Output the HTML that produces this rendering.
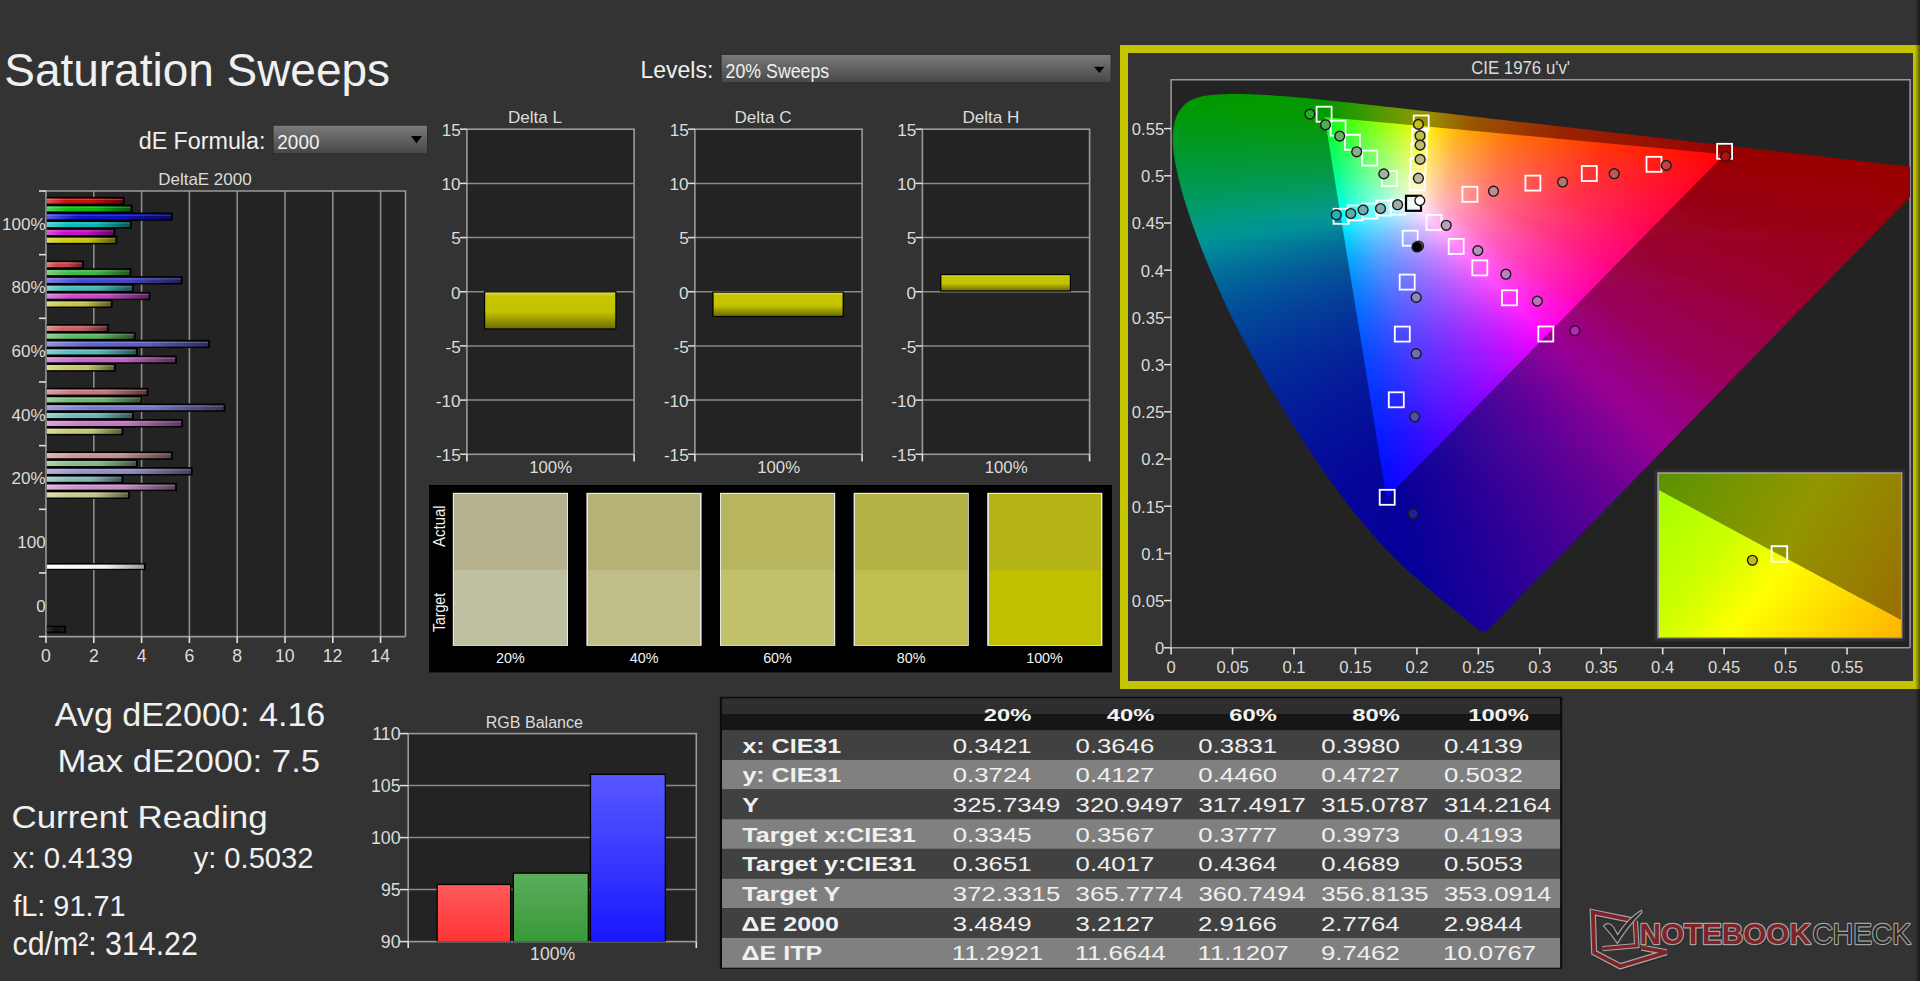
<!DOCTYPE html>
<html><head><meta charset="utf-8"><style>
html,body{margin:0;padding:0;background:#333333;width:1920px;height:981px;overflow:hidden}
svg{position:absolute;left:0;top:0}
text{font-family:"Liberation Sans",sans-serif}
.lay{position:absolute;overflow:hidden}
.lay i{position:absolute;left:0;right:0;height:3px;display:block}
</style></head><body>
<svg width="1920" height="981" viewBox="0 0 1920 981"><defs><linearGradient id="dd" x1="0" y1="0" x2="0" y2="1"><stop offset="0" stop-color="#7a7a7a"/><stop offset="1" stop-color="#474747"/></linearGradient><linearGradient id="b1" x1="0" y1="0" x2="1" y2="0"><stop offset="0" stop-color="#db5858"/><stop offset="0.25" stop-color="#cc1010"/><stop offset="0.6" stop-color="#c21010"/><stop offset="1" stop-color="#5c0707"/></linearGradient><linearGradient id="b2" x1="0" y1="0" x2="1" y2="0"><stop offset="0" stop-color="#57d157"/><stop offset="0.25" stop-color="#0fbd0f"/><stop offset="0.6" stop-color="#0eb30e"/><stop offset="1" stop-color="#075507"/></linearGradient><linearGradient id="b3" x1="0" y1="0" x2="1" y2="0"><stop offset="0" stop-color="#5858db"/><stop offset="0.25" stop-color="#1010cc"/><stop offset="0.6" stop-color="#1010c2"/><stop offset="1" stop-color="#07075c"/></linearGradient><linearGradient id="b4" x1="0" y1="0" x2="1" y2="0"><stop offset="0" stop-color="#57d1d1"/><stop offset="0.25" stop-color="#0fbdbd"/><stop offset="0.6" stop-color="#0eb3b3"/><stop offset="1" stop-color="#075555"/></linearGradient><linearGradient id="b5" x1="0" y1="0" x2="1" y2="0"><stop offset="0" stop-color="#db58db"/><stop offset="0.25" stop-color="#cc10cc"/><stop offset="0.6" stop-color="#c210c2"/><stop offset="1" stop-color="#5c075c"/></linearGradient><linearGradient id="b6" x1="0" y1="0" x2="1" y2="0"><stop offset="0" stop-color="#dbdb58"/><stop offset="0.25" stop-color="#cccc10"/><stop offset="0.6" stop-color="#c2c210"/><stop offset="1" stop-color="#5c5c07"/></linearGradient><linearGradient id="b7" x1="0" y1="0" x2="1" y2="0"><stop offset="0" stop-color="#db8080"/><stop offset="0.25" stop-color="#cc4949"/><stop offset="0.6" stop-color="#c24646"/><stop offset="1" stop-color="#5c2121"/></linearGradient><linearGradient id="b8" x1="0" y1="0" x2="1" y2="0"><stop offset="0" stop-color="#7cd17c"/><stop offset="0.25" stop-color="#44bd44"/><stop offset="0.6" stop-color="#41b341"/><stop offset="1" stop-color="#1f551f"/></linearGradient><linearGradient id="b9" x1="0" y1="0" x2="1" y2="0"><stop offset="0" stop-color="#8080db"/><stop offset="0.25" stop-color="#4949cc"/><stop offset="0.6" stop-color="#4646c2"/><stop offset="1" stop-color="#21215c"/></linearGradient><linearGradient id="b10" x1="0" y1="0" x2="1" y2="0"><stop offset="0" stop-color="#7cd1d1"/><stop offset="0.25" stop-color="#44bdbd"/><stop offset="0.6" stop-color="#41b3b3"/><stop offset="1" stop-color="#1f5555"/></linearGradient><linearGradient id="b11" x1="0" y1="0" x2="1" y2="0"><stop offset="0" stop-color="#db80db"/><stop offset="0.25" stop-color="#cc49cc"/><stop offset="0.6" stop-color="#c246c2"/><stop offset="1" stop-color="#5c215c"/></linearGradient><linearGradient id="b12" x1="0" y1="0" x2="1" y2="0"><stop offset="0" stop-color="#dbdb80"/><stop offset="0.25" stop-color="#cccc49"/><stop offset="0.6" stop-color="#c2c246"/><stop offset="1" stop-color="#5c5c21"/></linearGradient><linearGradient id="b13" x1="0" y1="0" x2="1" y2="0"><stop offset="0" stop-color="#db9292"/><stop offset="0.25" stop-color="#cc6464"/><stop offset="0.6" stop-color="#c25f5f"/><stop offset="1" stop-color="#5c2d2d"/></linearGradient><linearGradient id="b14" x1="0" y1="0" x2="1" y2="0"><stop offset="0" stop-color="#8dd18d"/><stop offset="0.25" stop-color="#5cbd5c"/><stop offset="0.6" stop-color="#58b358"/><stop offset="1" stop-color="#2a552a"/></linearGradient><linearGradient id="b15" x1="0" y1="0" x2="1" y2="0"><stop offset="0" stop-color="#9292db"/><stop offset="0.25" stop-color="#6464cc"/><stop offset="0.6" stop-color="#5f5fc2"/><stop offset="1" stop-color="#2d2d5c"/></linearGradient><linearGradient id="b16" x1="0" y1="0" x2="1" y2="0"><stop offset="0" stop-color="#8dd1d1"/><stop offset="0.25" stop-color="#5cbdbd"/><stop offset="0.6" stop-color="#58b3b3"/><stop offset="1" stop-color="#2a5555"/></linearGradient><linearGradient id="b17" x1="0" y1="0" x2="1" y2="0"><stop offset="0" stop-color="#db92db"/><stop offset="0.25" stop-color="#cc64cc"/><stop offset="0.6" stop-color="#c25fc2"/><stop offset="1" stop-color="#5c2d5c"/></linearGradient><linearGradient id="b18" x1="0" y1="0" x2="1" y2="0"><stop offset="0" stop-color="#dbdb92"/><stop offset="0.25" stop-color="#cccc64"/><stop offset="0.6" stop-color="#c2c25f"/><stop offset="1" stop-color="#5c5c2d"/></linearGradient><linearGradient id="b19" x1="0" y1="0" x2="1" y2="0"><stop offset="0" stop-color="#dba2a2"/><stop offset="0.25" stop-color="#cc7a7a"/><stop offset="0.6" stop-color="#c27474"/><stop offset="1" stop-color="#5c3737"/></linearGradient><linearGradient id="b20" x1="0" y1="0" x2="1" y2="0"><stop offset="0" stop-color="#9cd19c"/><stop offset="0.25" stop-color="#71bd71"/><stop offset="0.6" stop-color="#6cb36c"/><stop offset="1" stop-color="#335533"/></linearGradient><linearGradient id="b21" x1="0" y1="0" x2="1" y2="0"><stop offset="0" stop-color="#a2a2db"/><stop offset="0.25" stop-color="#7a7acc"/><stop offset="0.6" stop-color="#7474c2"/><stop offset="1" stop-color="#37375c"/></linearGradient><linearGradient id="b22" x1="0" y1="0" x2="1" y2="0"><stop offset="0" stop-color="#9cd1d1"/><stop offset="0.25" stop-color="#71bdbd"/><stop offset="0.6" stop-color="#6cb3b3"/><stop offset="1" stop-color="#335555"/></linearGradient><linearGradient id="b23" x1="0" y1="0" x2="1" y2="0"><stop offset="0" stop-color="#dba2db"/><stop offset="0.25" stop-color="#cc7acc"/><stop offset="0.6" stop-color="#c274c2"/><stop offset="1" stop-color="#5c375c"/></linearGradient><linearGradient id="b24" x1="0" y1="0" x2="1" y2="0"><stop offset="0" stop-color="#dbdba2"/><stop offset="0.25" stop-color="#cccc7a"/><stop offset="0.6" stop-color="#c2c274"/><stop offset="1" stop-color="#5c5c37"/></linearGradient><linearGradient id="b25" x1="0" y1="0" x2="1" y2="0"><stop offset="0" stop-color="#dbb3b3"/><stop offset="0.25" stop-color="#cc9393"/><stop offset="0.6" stop-color="#c28c8c"/><stop offset="1" stop-color="#5c4242"/></linearGradient><linearGradient id="b26" x1="0" y1="0" x2="1" y2="0"><stop offset="0" stop-color="#acd1ac"/><stop offset="0.25" stop-color="#88bd88"/><stop offset="0.6" stop-color="#81b381"/><stop offset="1" stop-color="#3d553d"/></linearGradient><linearGradient id="b27" x1="0" y1="0" x2="1" y2="0"><stop offset="0" stop-color="#b3b3db"/><stop offset="0.25" stop-color="#9393cc"/><stop offset="0.6" stop-color="#8c8cc2"/><stop offset="1" stop-color="#42425c"/></linearGradient><linearGradient id="b28" x1="0" y1="0" x2="1" y2="0"><stop offset="0" stop-color="#acd1d1"/><stop offset="0.25" stop-color="#88bdbd"/><stop offset="0.6" stop-color="#81b3b3"/><stop offset="1" stop-color="#3d5555"/></linearGradient><linearGradient id="b29" x1="0" y1="0" x2="1" y2="0"><stop offset="0" stop-color="#dbb3db"/><stop offset="0.25" stop-color="#cc93cc"/><stop offset="0.6" stop-color="#c28cc2"/><stop offset="1" stop-color="#5c425c"/></linearGradient><linearGradient id="b30" x1="0" y1="0" x2="1" y2="0"><stop offset="0" stop-color="#dbdbb3"/><stop offset="0.25" stop-color="#cccc93"/><stop offset="0.6" stop-color="#c2c28c"/><stop offset="1" stop-color="#5c5c42"/></linearGradient><linearGradient id="bw" x1="0" y1="0" x2="1" y2="0"><stop offset="0" stop-color="#ffffff"/><stop offset="0.6" stop-color="#f4f4f4"/><stop offset="1" stop-color="#9a9a9a"/></linearGradient><linearGradient id="bk" x1="0" y1="0" x2="1" y2="0"><stop offset="0" stop-color="#303030"/><stop offset="0.5" stop-color="#101010"/><stop offset="1" stop-color="#1a1a1a"/></linearGradient><linearGradient id="yb" x1="0" y1="0" x2="0" y2="1"><stop offset="0" stop-color="#d8d84a"/><stop offset="0.12" stop-color="#c6c600"/><stop offset="0.55" stop-color="#c2c200"/><stop offset="1" stop-color="#6e6e00"/></linearGradient><linearGradient id="rr" x1="0" y1="0" x2="0" y2="1"><stop offset="0" stop-color="#ff5a5a"/><stop offset="1" stop-color="#ff3434"/></linearGradient><linearGradient id="rg" x1="0" y1="0" x2="0" y2="1"><stop offset="0" stop-color="#5cac5c"/><stop offset="1" stop-color="#379a37"/></linearGradient><linearGradient id="rb" x1="0" y1="0" x2="0" y2="1"><stop offset="0" stop-color="#5858ff"/><stop offset="1" stop-color="#1818ff"/></linearGradient><linearGradient id="edge" x1="0" y1="0" x2="1" y2="0"><stop offset="0" stop-color="#000" stop-opacity="0"/><stop offset="1" stop-color="#000" stop-opacity="0.55"/></linearGradient><linearGradient id="ib" gradientUnits="userSpaceOnUse" x1="1659" y1="474" x2="1901" y2="670"><stop offset="0" stop-color="#a0ff00"/><stop offset="0.3" stop-color="#ccff00"/><stop offset="0.5" stop-color="#ffff00"/><stop offset="0.72" stop-color="#ffd800"/><stop offset="1" stop-color="#ffa800"/></linearGradient><linearGradient id="id" gradientUnits="userSpaceOnUse" x1="1659" y1="474" x2="1901" y2="620.1"><stop offset="0" stop-color="#5a9400"/><stop offset="0.5" stop-color="#929600"/><stop offset="1" stop-color="#9a6e00"/></linearGradient></defs>
<text x="4.23" y="85.80" font-size="46.21" textLength="385.84" lengthAdjust="spacingAndGlyphs" fill="#f0f0f0">Saturation Sweeps</text>
<rect x="272.50" y="124.70" width="155.50" height="29.60" fill="#2b2b2b"/>
<rect x="273.50" y="125.70" width="153.50" height="27.60" fill="url(#dd)"/>
<text x="277.35" y="148.60" font-size="19.93" textLength="42.10" lengthAdjust="spacingAndGlyphs" fill="#f0f0f0">2000</text>
<polygon points="411.0,136.0 422.0,136.0 416.5,143.3" fill="#000"/>
<text x="138.71" y="148.60" font-size="24.55" textLength="126.72" lengthAdjust="spacingAndGlyphs" fill="#f0f0f0">dE Formula:</text>
<rect x="720.60" y="53.90" width="391.00" height="29.40" fill="#2b2b2b"/>
<rect x="721.60" y="54.90" width="389.00" height="27.40" fill="url(#dd)"/>
<text x="725.61" y="77.70" font-size="20.50" textLength="103.60" lengthAdjust="spacingAndGlyphs" fill="#f0f0f0">20% Sweeps</text>
<polygon points="1094.0,66.7 1104.7,66.7 1099.3,73.0" fill="#000"/>
<text x="640.40" y="77.70" font-size="24.00" textLength="72.89" lengthAdjust="spacingAndGlyphs" fill="#f0f0f0">Levels:</text>
<text x="158.20" y="184.80" font-size="16.55" textLength="93.46" lengthAdjust="spacingAndGlyphs" fill="#dcdcdc">DeltaE 2000</text>
<rect x="46.00" y="191.00" width="359.50" height="445.60" fill="#232323"/>
<line x1="93.80" y1="191.00" x2="93.80" y2="636.60" stroke="#8a8a8a" stroke-width="1.6"/>
<line x1="141.60" y1="191.00" x2="141.60" y2="636.60" stroke="#8a8a8a" stroke-width="1.6"/>
<line x1="189.40" y1="191.00" x2="189.40" y2="636.60" stroke="#8a8a8a" stroke-width="1.6"/>
<line x1="237.20" y1="191.00" x2="237.20" y2="636.60" stroke="#8a8a8a" stroke-width="1.6"/>
<line x1="285.00" y1="191.00" x2="285.00" y2="636.60" stroke="#8a8a8a" stroke-width="1.6"/>
<line x1="332.80" y1="191.00" x2="332.80" y2="636.60" stroke="#8a8a8a" stroke-width="1.6"/>
<line x1="380.60" y1="191.00" x2="380.60" y2="636.60" stroke="#8a8a8a" stroke-width="1.6"/>
<polyline points="46.0,636.6 46.0,191.0 405.5,191.0 405.5,636.6" fill="none" stroke="#9a9a9a" stroke-width="1.6"/>
<line x1="46.00" y1="636.60" x2="405.50" y2="636.60" stroke="#9a9a9a" stroke-width="1.6"/>
<line x1="39.00" y1="191.00" x2="46.00" y2="191.00" stroke="#e0e0e0" stroke-width="1.6"/>
<line x1="39.00" y1="254.66" x2="46.00" y2="254.66" stroke="#e0e0e0" stroke-width="1.6"/>
<line x1="39.00" y1="318.31" x2="46.00" y2="318.31" stroke="#e0e0e0" stroke-width="1.6"/>
<line x1="39.00" y1="381.97" x2="46.00" y2="381.97" stroke="#e0e0e0" stroke-width="1.6"/>
<line x1="39.00" y1="445.63" x2="46.00" y2="445.63" stroke="#e0e0e0" stroke-width="1.6"/>
<line x1="39.00" y1="509.29" x2="46.00" y2="509.29" stroke="#e0e0e0" stroke-width="1.6"/>
<line x1="39.00" y1="572.94" x2="46.00" y2="572.94" stroke="#e0e0e0" stroke-width="1.6"/>
<line x1="39.00" y1="636.60" x2="46.00" y2="636.60" stroke="#e0e0e0" stroke-width="1.6"/>
<line x1="46.00" y1="636.60" x2="46.00" y2="643.00" stroke="#e0e0e0" stroke-width="1.6"/>
<text x="41.08" y="662.00" font-size="17.63" textLength="9.81" lengthAdjust="spacingAndGlyphs" fill="#dcdcdc">0</text>
<line x1="93.80" y1="636.60" x2="93.80" y2="643.00" stroke="#e0e0e0" stroke-width="1.6"/>
<text x="88.91" y="662.00" font-size="17.63" textLength="9.81" lengthAdjust="spacingAndGlyphs" fill="#dcdcdc">2</text>
<line x1="141.60" y1="636.60" x2="141.60" y2="643.00" stroke="#e0e0e0" stroke-width="1.6"/>
<text x="136.75" y="662.00" font-size="17.63" textLength="9.81" lengthAdjust="spacingAndGlyphs" fill="#dcdcdc">4</text>
<line x1="189.40" y1="636.60" x2="189.40" y2="643.00" stroke="#e0e0e0" stroke-width="1.6"/>
<text x="184.44" y="662.00" font-size="17.63" textLength="9.81" lengthAdjust="spacingAndGlyphs" fill="#dcdcdc">6</text>
<line x1="237.20" y1="636.60" x2="237.20" y2="643.00" stroke="#e0e0e0" stroke-width="1.6"/>
<text x="232.31" y="662.00" font-size="17.63" textLength="9.81" lengthAdjust="spacingAndGlyphs" fill="#dcdcdc">8</text>
<line x1="285.00" y1="636.60" x2="285.00" y2="643.00" stroke="#e0e0e0" stroke-width="1.6"/>
<text x="274.88" y="662.00" font-size="17.63" textLength="19.62" lengthAdjust="spacingAndGlyphs" fill="#dcdcdc">10</text>
<line x1="332.80" y1="636.60" x2="332.80" y2="643.00" stroke="#e0e0e0" stroke-width="1.6"/>
<text x="322.79" y="662.00" font-size="17.63" textLength="19.62" lengthAdjust="spacingAndGlyphs" fill="#dcdcdc">12</text>
<line x1="380.60" y1="636.60" x2="380.60" y2="643.00" stroke="#e0e0e0" stroke-width="1.6"/>
<text x="370.39" y="662.00" font-size="17.63" textLength="19.62" lengthAdjust="spacingAndGlyphs" fill="#dcdcdc">14</text>
<text x="2.06" y="229.83" font-size="17.06" textLength="43.64" lengthAdjust="spacingAndGlyphs" fill="#dcdcdc">100%</text>
<text x="11.53" y="293.49" font-size="17.06" textLength="34.15" lengthAdjust="spacingAndGlyphs" fill="#dcdcdc">80%</text>
<text x="11.53" y="357.14" font-size="17.06" textLength="34.15" lengthAdjust="spacingAndGlyphs" fill="#dcdcdc">60%</text>
<text x="11.53" y="420.80" font-size="17.06" textLength="34.15" lengthAdjust="spacingAndGlyphs" fill="#dcdcdc">40%</text>
<text x="11.53" y="484.46" font-size="17.06" textLength="34.15" lengthAdjust="spacingAndGlyphs" fill="#dcdcdc">20%</text>
<text x="17.29" y="548.11" font-size="17.06" textLength="28.47" lengthAdjust="spacingAndGlyphs" fill="#dcdcdc">100</text>
<text x="36.27" y="611.77" font-size="17.06" textLength="9.49" lengthAdjust="spacingAndGlyphs" fill="#dcdcdc">0</text>
<rect x="46.80" y="196.80" width="77.80" height="8.30" fill="#000"/>
<rect x="46.80" y="198.40" width="76.00" height="5.20" fill="url(#b1)"/>
<rect x="46.80" y="199.00" width="76.00" height="1.00" fill="#ffffff" fill-opacity="0.22"/>
<rect x="46.80" y="204.65" width="85.70" height="8.30" fill="#000"/>
<rect x="46.80" y="206.25" width="83.90" height="5.20" fill="url(#b2)"/>
<rect x="46.80" y="206.85" width="83.90" height="1.00" fill="#ffffff" fill-opacity="0.22"/>
<rect x="46.80" y="212.50" width="125.90" height="8.30" fill="#000"/>
<rect x="46.80" y="214.10" width="124.10" height="5.20" fill="url(#b3)"/>
<rect x="46.80" y="214.70" width="124.10" height="1.00" fill="#ffffff" fill-opacity="0.22"/>
<rect x="46.80" y="220.35" width="84.90" height="8.30" fill="#000"/>
<rect x="46.80" y="221.95" width="83.10" height="5.20" fill="url(#b4)"/>
<rect x="46.80" y="222.55" width="83.10" height="1.00" fill="#ffffff" fill-opacity="0.22"/>
<rect x="46.80" y="228.20" width="68.60" height="8.30" fill="#000"/>
<rect x="46.80" y="229.80" width="66.80" height="5.20" fill="url(#b5)"/>
<rect x="46.80" y="230.40" width="66.80" height="1.00" fill="#ffffff" fill-opacity="0.22"/>
<rect x="46.80" y="236.05" width="70.50" height="8.30" fill="#000"/>
<rect x="46.80" y="237.65" width="68.70" height="5.20" fill="url(#b6)"/>
<rect x="46.80" y="238.25" width="68.70" height="1.00" fill="#ffffff" fill-opacity="0.22"/>
<rect x="46.80" y="260.46" width="37.20" height="8.30" fill="#000"/>
<rect x="46.80" y="262.06" width="35.40" height="5.20" fill="url(#b7)"/>
<rect x="46.80" y="262.66" width="35.40" height="1.00" fill="#ffffff" fill-opacity="0.22"/>
<rect x="46.80" y="268.31" width="84.70" height="8.30" fill="#000"/>
<rect x="46.80" y="269.91" width="82.90" height="5.20" fill="url(#b8)"/>
<rect x="46.80" y="270.51" width="82.90" height="1.00" fill="#ffffff" fill-opacity="0.22"/>
<rect x="46.80" y="276.16" width="135.70" height="8.30" fill="#000"/>
<rect x="46.80" y="277.76" width="133.90" height="5.20" fill="url(#b9)"/>
<rect x="46.80" y="278.36" width="133.90" height="1.00" fill="#ffffff" fill-opacity="0.22"/>
<rect x="46.80" y="284.01" width="87.20" height="8.30" fill="#000"/>
<rect x="46.80" y="285.61" width="85.40" height="5.20" fill="url(#b10)"/>
<rect x="46.80" y="286.21" width="85.40" height="1.00" fill="#ffffff" fill-opacity="0.22"/>
<rect x="46.80" y="291.86" width="103.60" height="8.30" fill="#000"/>
<rect x="46.80" y="293.46" width="101.80" height="5.20" fill="url(#b11)"/>
<rect x="46.80" y="294.06" width="101.80" height="1.00" fill="#ffffff" fill-opacity="0.22"/>
<rect x="46.80" y="299.71" width="65.80" height="8.30" fill="#000"/>
<rect x="46.80" y="301.31" width="64.00" height="5.20" fill="url(#b12)"/>
<rect x="46.80" y="301.91" width="64.00" height="1.00" fill="#ffffff" fill-opacity="0.22"/>
<rect x="46.80" y="324.11" width="62.20" height="8.30" fill="#000"/>
<rect x="46.80" y="325.71" width="60.40" height="5.20" fill="url(#b13)"/>
<rect x="46.80" y="326.31" width="60.40" height="1.00" fill="#ffffff" fill-opacity="0.22"/>
<rect x="46.80" y="331.96" width="88.80" height="8.30" fill="#000"/>
<rect x="46.80" y="333.56" width="87.00" height="5.20" fill="url(#b14)"/>
<rect x="46.80" y="334.16" width="87.00" height="1.00" fill="#ffffff" fill-opacity="0.22"/>
<rect x="46.80" y="339.81" width="163.20" height="8.30" fill="#000"/>
<rect x="46.80" y="341.41" width="161.40" height="5.20" fill="url(#b15)"/>
<rect x="46.80" y="342.01" width="161.40" height="1.00" fill="#ffffff" fill-opacity="0.22"/>
<rect x="46.80" y="347.66" width="90.80" height="8.30" fill="#000"/>
<rect x="46.80" y="349.26" width="89.00" height="5.20" fill="url(#b16)"/>
<rect x="46.80" y="349.86" width="89.00" height="1.00" fill="#ffffff" fill-opacity="0.22"/>
<rect x="46.80" y="355.51" width="130.10" height="8.30" fill="#000"/>
<rect x="46.80" y="357.11" width="128.30" height="5.20" fill="url(#b17)"/>
<rect x="46.80" y="357.71" width="128.30" height="1.00" fill="#ffffff" fill-opacity="0.22"/>
<rect x="46.80" y="363.36" width="68.90" height="8.30" fill="#000"/>
<rect x="46.80" y="364.96" width="67.10" height="5.20" fill="url(#b18)"/>
<rect x="46.80" y="365.56" width="67.10" height="1.00" fill="#ffffff" fill-opacity="0.22"/>
<rect x="46.80" y="387.77" width="101.60" height="8.30" fill="#000"/>
<rect x="46.80" y="389.37" width="99.80" height="5.20" fill="url(#b19)"/>
<rect x="46.80" y="389.97" width="99.80" height="1.00" fill="#ffffff" fill-opacity="0.22"/>
<rect x="46.80" y="395.62" width="95.60" height="8.30" fill="#000"/>
<rect x="46.80" y="397.22" width="93.80" height="5.20" fill="url(#b20)"/>
<rect x="46.80" y="397.82" width="93.80" height="1.00" fill="#ffffff" fill-opacity="0.22"/>
<rect x="46.80" y="403.47" width="178.60" height="8.30" fill="#000"/>
<rect x="46.80" y="405.07" width="176.80" height="5.20" fill="url(#b21)"/>
<rect x="46.80" y="405.67" width="176.80" height="1.00" fill="#ffffff" fill-opacity="0.22"/>
<rect x="46.80" y="411.32" width="87.10" height="8.30" fill="#000"/>
<rect x="46.80" y="412.92" width="85.30" height="5.20" fill="url(#b22)"/>
<rect x="46.80" y="413.52" width="85.30" height="1.00" fill="#ffffff" fill-opacity="0.22"/>
<rect x="46.80" y="419.17" width="136.20" height="8.30" fill="#000"/>
<rect x="46.80" y="420.77" width="134.40" height="5.20" fill="url(#b23)"/>
<rect x="46.80" y="421.37" width="134.40" height="1.00" fill="#ffffff" fill-opacity="0.22"/>
<rect x="46.80" y="427.02" width="76.60" height="8.30" fill="#000"/>
<rect x="46.80" y="428.62" width="74.80" height="5.20" fill="url(#b24)"/>
<rect x="46.80" y="429.22" width="74.80" height="1.00" fill="#ffffff" fill-opacity="0.22"/>
<rect x="46.80" y="451.43" width="125.90" height="8.30" fill="#000"/>
<rect x="46.80" y="453.03" width="124.10" height="5.20" fill="url(#b25)"/>
<rect x="46.80" y="453.63" width="124.10" height="1.00" fill="#ffffff" fill-opacity="0.22"/>
<rect x="46.80" y="459.28" width="90.90" height="8.30" fill="#000"/>
<rect x="46.80" y="460.88" width="89.10" height="5.20" fill="url(#b26)"/>
<rect x="46.80" y="461.48" width="89.10" height="1.00" fill="#ffffff" fill-opacity="0.22"/>
<rect x="46.80" y="467.13" width="145.80" height="8.30" fill="#000"/>
<rect x="46.80" y="468.73" width="144.00" height="5.20" fill="url(#b27)"/>
<rect x="46.80" y="469.33" width="144.00" height="1.00" fill="#ffffff" fill-opacity="0.22"/>
<rect x="46.80" y="474.98" width="76.60" height="8.30" fill="#000"/>
<rect x="46.80" y="476.58" width="74.80" height="5.20" fill="url(#b28)"/>
<rect x="46.80" y="477.18" width="74.80" height="1.00" fill="#ffffff" fill-opacity="0.22"/>
<rect x="46.80" y="482.83" width="130.10" height="8.30" fill="#000"/>
<rect x="46.80" y="484.43" width="128.30" height="5.20" fill="url(#b29)"/>
<rect x="46.80" y="485.03" width="128.30" height="1.00" fill="#ffffff" fill-opacity="0.22"/>
<rect x="46.80" y="490.68" width="83.10" height="8.30" fill="#000"/>
<rect x="46.80" y="492.28" width="81.30" height="5.20" fill="url(#b30)"/>
<rect x="46.80" y="492.88" width="81.30" height="1.00" fill="#ffffff" fill-opacity="0.22"/>
<rect x="46.80" y="563.20" width="98.90" height="6.80" fill="#000"/>
<rect x="46.80" y="564.60" width="97.10" height="4.20" fill="url(#bw)"/>
<rect x="46.80" y="625.70" width="19.20" height="7.20" fill="#000"/>
<rect x="46.80" y="627.00" width="17.40" height="4.60" fill="url(#bk)"/>
<rect x="466.90" y="129.20" width="167.20" height="325.08" fill="#232323"/>
<line x1="466.90" y1="183.38" x2="634.10" y2="183.38" stroke="#8a8a8a" stroke-width="1.5"/>
<line x1="466.90" y1="237.56" x2="634.10" y2="237.56" stroke="#8a8a8a" stroke-width="1.5"/>
<line x1="466.90" y1="291.74" x2="634.10" y2="291.74" stroke="#8a8a8a" stroke-width="1.5"/>
<line x1="466.90" y1="345.92" x2="634.10" y2="345.92" stroke="#8a8a8a" stroke-width="1.5"/>
<line x1="466.90" y1="400.10" x2="634.10" y2="400.10" stroke="#8a8a8a" stroke-width="1.5"/>
<rect x="466.9" y="129.2" width="167.20" height="325.08" fill="none" stroke="#9a9a9a" stroke-width="1.6"/>
<line x1="459.90" y1="129.20" x2="466.90" y2="129.20" stroke="#e0e0e0" stroke-width="1.5"/>
<text x="441.63" y="136.10" font-size="17.16" textLength="19.09" lengthAdjust="spacingAndGlyphs" fill="#dcdcdc">15</text>
<line x1="459.90" y1="183.38" x2="466.90" y2="183.38" stroke="#e0e0e0" stroke-width="1.5"/>
<text x="441.59" y="190.28" font-size="17.16" textLength="19.09" lengthAdjust="spacingAndGlyphs" fill="#dcdcdc">10</text>
<line x1="459.90" y1="237.56" x2="466.90" y2="237.56" stroke="#e0e0e0" stroke-width="1.5"/>
<text x="451.16" y="244.46" font-size="17.16" textLength="9.55" lengthAdjust="spacingAndGlyphs" fill="#dcdcdc">5</text>
<line x1="459.90" y1="291.74" x2="466.90" y2="291.74" stroke="#e0e0e0" stroke-width="1.5"/>
<text x="451.12" y="298.64" font-size="17.16" textLength="9.55" lengthAdjust="spacingAndGlyphs" fill="#dcdcdc">0</text>
<line x1="459.90" y1="345.92" x2="466.90" y2="345.92" stroke="#e0e0e0" stroke-width="1.5"/>
<text x="445.45" y="352.82" font-size="17.16" textLength="15.26" lengthAdjust="spacingAndGlyphs" fill="#dcdcdc">-5</text>
<line x1="459.90" y1="400.10" x2="466.90" y2="400.10" stroke="#e0e0e0" stroke-width="1.5"/>
<text x="435.84" y="407.00" font-size="17.16" textLength="24.81" lengthAdjust="spacingAndGlyphs" fill="#dcdcdc">-10</text>
<line x1="459.90" y1="454.28" x2="466.90" y2="454.28" stroke="#e0e0e0" stroke-width="1.5"/>
<text x="435.89" y="461.18" font-size="17.16" textLength="24.81" lengthAdjust="spacingAndGlyphs" fill="#dcdcdc">-15</text>
<line x1="466.90" y1="454.28" x2="466.90" y2="461.40" stroke="#e0e0e0" stroke-width="1.6"/>
<line x1="634.10" y1="454.28" x2="634.10" y2="461.40" stroke="#e0e0e0" stroke-width="1.6"/>
<text x="507.88" y="122.90" font-size="17.10" textLength="54.19" lengthAdjust="spacingAndGlyphs" fill="#dcdcdc">Delta L</text>
<text x="529.21" y="472.70" font-size="16.77" textLength="42.90" lengthAdjust="spacingAndGlyphs" fill="#dcdcdc">100%</text>
<rect x="484.00" y="291.20" width="132.50" height="38.30" fill="#000"/>
<rect x="485.20" y="292.40" width="130.10" height="35.90" fill="url(#yb)"/>
<rect x="694.90" y="129.20" width="167.20" height="325.08" fill="#232323"/>
<line x1="694.90" y1="183.38" x2="862.10" y2="183.38" stroke="#8a8a8a" stroke-width="1.5"/>
<line x1="694.90" y1="237.56" x2="862.10" y2="237.56" stroke="#8a8a8a" stroke-width="1.5"/>
<line x1="694.90" y1="291.74" x2="862.10" y2="291.74" stroke="#8a8a8a" stroke-width="1.5"/>
<line x1="694.90" y1="345.92" x2="862.10" y2="345.92" stroke="#8a8a8a" stroke-width="1.5"/>
<line x1="694.90" y1="400.10" x2="862.10" y2="400.10" stroke="#8a8a8a" stroke-width="1.5"/>
<rect x="694.9" y="129.2" width="167.20" height="325.08" fill="none" stroke="#9a9a9a" stroke-width="1.6"/>
<line x1="687.90" y1="129.20" x2="694.90" y2="129.20" stroke="#e0e0e0" stroke-width="1.5"/>
<text x="669.63" y="136.10" font-size="17.16" textLength="19.09" lengthAdjust="spacingAndGlyphs" fill="#dcdcdc">15</text>
<line x1="687.90" y1="183.38" x2="694.90" y2="183.38" stroke="#e0e0e0" stroke-width="1.5"/>
<text x="669.59" y="190.28" font-size="17.16" textLength="19.09" lengthAdjust="spacingAndGlyphs" fill="#dcdcdc">10</text>
<line x1="687.90" y1="237.56" x2="694.90" y2="237.56" stroke="#e0e0e0" stroke-width="1.5"/>
<text x="679.16" y="244.46" font-size="17.16" textLength="9.55" lengthAdjust="spacingAndGlyphs" fill="#dcdcdc">5</text>
<line x1="687.90" y1="291.74" x2="694.90" y2="291.74" stroke="#e0e0e0" stroke-width="1.5"/>
<text x="679.12" y="298.64" font-size="17.16" textLength="9.55" lengthAdjust="spacingAndGlyphs" fill="#dcdcdc">0</text>
<line x1="687.90" y1="345.92" x2="694.90" y2="345.92" stroke="#e0e0e0" stroke-width="1.5"/>
<text x="673.45" y="352.82" font-size="17.16" textLength="15.26" lengthAdjust="spacingAndGlyphs" fill="#dcdcdc">-5</text>
<line x1="687.90" y1="400.10" x2="694.90" y2="400.10" stroke="#e0e0e0" stroke-width="1.5"/>
<text x="663.84" y="407.00" font-size="17.16" textLength="24.81" lengthAdjust="spacingAndGlyphs" fill="#dcdcdc">-10</text>
<line x1="687.90" y1="454.28" x2="694.90" y2="454.28" stroke="#e0e0e0" stroke-width="1.5"/>
<text x="663.89" y="461.18" font-size="17.16" textLength="24.81" lengthAdjust="spacingAndGlyphs" fill="#dcdcdc">-15</text>
<line x1="694.90" y1="454.28" x2="694.90" y2="461.40" stroke="#e0e0e0" stroke-width="1.6"/>
<line x1="862.10" y1="454.28" x2="862.10" y2="461.40" stroke="#e0e0e0" stroke-width="1.6"/>
<text x="734.50" y="122.90" font-size="17.10" textLength="57.03" lengthAdjust="spacingAndGlyphs" fill="#dcdcdc">Delta C</text>
<text x="757.21" y="472.70" font-size="16.77" textLength="42.90" lengthAdjust="spacingAndGlyphs" fill="#dcdcdc">100%</text>
<rect x="712.40" y="291.50" width="131.40" height="25.60" fill="#000"/>
<rect x="713.60" y="292.70" width="129.00" height="23.20" fill="url(#yb)"/>
<rect x="922.40" y="129.20" width="167.20" height="325.08" fill="#232323"/>
<line x1="922.40" y1="183.38" x2="1089.60" y2="183.38" stroke="#8a8a8a" stroke-width="1.5"/>
<line x1="922.40" y1="237.56" x2="1089.60" y2="237.56" stroke="#8a8a8a" stroke-width="1.5"/>
<line x1="922.40" y1="291.74" x2="1089.60" y2="291.74" stroke="#8a8a8a" stroke-width="1.5"/>
<line x1="922.40" y1="345.92" x2="1089.60" y2="345.92" stroke="#8a8a8a" stroke-width="1.5"/>
<line x1="922.40" y1="400.10" x2="1089.60" y2="400.10" stroke="#8a8a8a" stroke-width="1.5"/>
<rect x="922.4" y="129.2" width="167.20" height="325.08" fill="none" stroke="#9a9a9a" stroke-width="1.6"/>
<line x1="915.40" y1="129.20" x2="922.40" y2="129.20" stroke="#e0e0e0" stroke-width="1.5"/>
<text x="897.13" y="136.10" font-size="17.16" textLength="19.09" lengthAdjust="spacingAndGlyphs" fill="#dcdcdc">15</text>
<line x1="915.40" y1="183.38" x2="922.40" y2="183.38" stroke="#e0e0e0" stroke-width="1.5"/>
<text x="897.09" y="190.28" font-size="17.16" textLength="19.09" lengthAdjust="spacingAndGlyphs" fill="#dcdcdc">10</text>
<line x1="915.40" y1="237.56" x2="922.40" y2="237.56" stroke="#e0e0e0" stroke-width="1.5"/>
<text x="906.66" y="244.46" font-size="17.16" textLength="9.55" lengthAdjust="spacingAndGlyphs" fill="#dcdcdc">5</text>
<line x1="915.40" y1="291.74" x2="922.40" y2="291.74" stroke="#e0e0e0" stroke-width="1.5"/>
<text x="906.62" y="298.64" font-size="17.16" textLength="9.55" lengthAdjust="spacingAndGlyphs" fill="#dcdcdc">0</text>
<line x1="915.40" y1="345.92" x2="922.40" y2="345.92" stroke="#e0e0e0" stroke-width="1.5"/>
<text x="900.95" y="352.82" font-size="17.16" textLength="15.26" lengthAdjust="spacingAndGlyphs" fill="#dcdcdc">-5</text>
<line x1="915.40" y1="400.10" x2="922.40" y2="400.10" stroke="#e0e0e0" stroke-width="1.5"/>
<text x="891.34" y="407.00" font-size="17.16" textLength="24.81" lengthAdjust="spacingAndGlyphs" fill="#dcdcdc">-10</text>
<line x1="915.40" y1="454.28" x2="922.40" y2="454.28" stroke="#e0e0e0" stroke-width="1.5"/>
<text x="891.39" y="461.18" font-size="17.16" textLength="24.81" lengthAdjust="spacingAndGlyphs" fill="#dcdcdc">-15</text>
<line x1="922.40" y1="454.28" x2="922.40" y2="461.40" stroke="#e0e0e0" stroke-width="1.6"/>
<line x1="1089.60" y1="454.28" x2="1089.60" y2="461.40" stroke="#e0e0e0" stroke-width="1.6"/>
<text x="962.38" y="122.90" font-size="17.10" textLength="57.03" lengthAdjust="spacingAndGlyphs" fill="#dcdcdc">Delta H</text>
<text x="984.71" y="472.70" font-size="16.77" textLength="42.90" lengthAdjust="spacingAndGlyphs" fill="#dcdcdc">100%</text>
<rect x="940.20" y="274.00" width="130.80" height="17.60" fill="#000"/>
<rect x="941.40" y="275.20" width="128.40" height="15.20" fill="url(#yb)"/>
<rect x="429.00" y="485.00" width="683.00" height="187.40" fill="#000"/>
<rect x="452.80" y="492.80" width="115.20" height="153.10" fill="#e8e8e8"/>
<rect x="454.10" y="494.10" width="112.60" height="76.00" fill="#b6b290" shape-rendering="crispEdges"/>
<rect x="454.10" y="569.50" width="112.60" height="75.10" fill="#bfc0a2" shape-rendering="crispEdges"/>
<text x="495.94" y="663.00" font-size="14.34" textLength="28.70" lengthAdjust="spacingAndGlyphs" fill="#f4f4f4">20%</text>
<rect x="586.40" y="492.80" width="115.20" height="153.10" fill="#e8e8e8"/>
<rect x="587.70" y="494.10" width="112.60" height="76.00" fill="#b5b476" shape-rendering="crispEdges"/>
<rect x="587.70" y="569.50" width="112.60" height="75.10" fill="#c0bf87" shape-rendering="crispEdges"/>
<text x="629.73" y="663.00" font-size="14.34" textLength="28.70" lengthAdjust="spacingAndGlyphs" fill="#f4f4f4">40%</text>
<rect x="720.00" y="492.80" width="115.20" height="153.10" fill="#e8e8e8"/>
<rect x="721.30" y="494.10" width="112.60" height="76.00" fill="#b7b65e" shape-rendering="crispEdges"/>
<rect x="721.30" y="569.50" width="112.60" height="75.10" fill="#c1c06b" shape-rendering="crispEdges"/>
<text x="763.14" y="663.00" font-size="14.34" textLength="28.70" lengthAdjust="spacingAndGlyphs" fill="#f4f4f4">60%</text>
<rect x="853.60" y="492.80" width="115.20" height="153.10" fill="#e8e8e8"/>
<rect x="854.90" y="494.10" width="112.60" height="76.00" fill="#b4b244" shape-rendering="crispEdges"/>
<rect x="854.90" y="569.50" width="112.60" height="75.10" fill="#bfbf4f" shape-rendering="crispEdges"/>
<text x="896.79" y="663.00" font-size="14.34" textLength="28.70" lengthAdjust="spacingAndGlyphs" fill="#f4f4f4">80%</text>
<rect x="987.20" y="492.80" width="115.20" height="153.10" fill="#e8e8e8"/>
<rect x="988.50" y="494.10" width="112.60" height="76.00" fill="#b4b417" shape-rendering="crispEdges"/>
<rect x="988.50" y="569.50" width="112.60" height="75.10" fill="#c0c000" shape-rendering="crispEdges"/>
<text x="1026.18" y="663.00" font-size="14.34" textLength="36.67" lengthAdjust="spacingAndGlyphs" fill="#f4f4f4">100%</text>
<g transform="translate(445.2,547) rotate(-90)"><text x="-0.04" y="0.00" font-size="15.72" textLength="41.74" lengthAdjust="spacingAndGlyphs" fill="#f4f4f4">Actual</text></g>
<g transform="translate(445.2,631.7) rotate(-90)"><text x="-0.32" y="0.00" font-size="16.58" textLength="39.11" lengthAdjust="spacingAndGlyphs" fill="#f4f4f4">Target</text></g>
<rect x="1120.00" y="45.00" width="800.00" height="644.00" fill="#c4c400"/>
<rect x="1128.00" y="53.00" width="785.00" height="628.00" fill="#333333"/>
<text x="1471.16" y="74.20" font-size="17.92" textLength="98.89" lengthAdjust="spacingAndGlyphs" fill="#dcdcdc">CIE 1976 u'v'</text>
<rect x="1171.10" y="79.80" width="739.00" height="568.00" fill="#232323"/>
<polyline points="1171.1,647.8 1171.1,79.8 1910.1,79.8 1910.1,647.8" fill="none" stroke="#9a9a9a" stroke-width="1.5"/>
<line x1="1171.10" y1="647.80" x2="1910.10" y2="647.80" stroke="#9a9a9a" stroke-width="1.6"/>
<line x1="1164.00" y1="647.80" x2="1171.10" y2="647.80" stroke="#e0e0e0" stroke-width="1.5"/>
<text x="1154.89" y="654.10" font-size="16.63" textLength="9.25" lengthAdjust="spacingAndGlyphs" fill="#dcdcdc">0</text>
<line x1="1164.00" y1="600.60" x2="1171.10" y2="600.60" stroke="#e0e0e0" stroke-width="1.5"/>
<text x="1131.82" y="606.90" font-size="16.63" textLength="32.37" lengthAdjust="spacingAndGlyphs" fill="#dcdcdc">0.05</text>
<line x1="1164.00" y1="553.40" x2="1171.10" y2="553.40" stroke="#e0e0e0" stroke-width="1.5"/>
<text x="1141.17" y="559.70" font-size="16.63" textLength="23.12" lengthAdjust="spacingAndGlyphs" fill="#dcdcdc">0.1</text>
<line x1="1164.00" y1="506.20" x2="1171.10" y2="506.20" stroke="#e0e0e0" stroke-width="1.5"/>
<text x="1131.82" y="512.50" font-size="16.63" textLength="32.37" lengthAdjust="spacingAndGlyphs" fill="#dcdcdc">0.15</text>
<line x1="1164.00" y1="459.00" x2="1171.10" y2="459.00" stroke="#e0e0e0" stroke-width="1.5"/>
<text x="1141.21" y="465.30" font-size="16.63" textLength="23.12" lengthAdjust="spacingAndGlyphs" fill="#dcdcdc">0.2</text>
<line x1="1164.00" y1="411.80" x2="1171.10" y2="411.80" stroke="#e0e0e0" stroke-width="1.5"/>
<text x="1131.82" y="418.10" font-size="16.63" textLength="32.37" lengthAdjust="spacingAndGlyphs" fill="#dcdcdc">0.25</text>
<line x1="1164.00" y1="364.60" x2="1171.10" y2="364.60" stroke="#e0e0e0" stroke-width="1.5"/>
<text x="1141.09" y="370.90" font-size="16.63" textLength="23.12" lengthAdjust="spacingAndGlyphs" fill="#dcdcdc">0.3</text>
<line x1="1164.00" y1="317.40" x2="1171.10" y2="317.40" stroke="#e0e0e0" stroke-width="1.5"/>
<text x="1131.82" y="323.70" font-size="16.63" textLength="32.37" lengthAdjust="spacingAndGlyphs" fill="#dcdcdc">0.35</text>
<line x1="1164.00" y1="270.20" x2="1171.10" y2="270.20" stroke="#e0e0e0" stroke-width="1.5"/>
<text x="1140.84" y="276.50" font-size="16.63" textLength="23.12" lengthAdjust="spacingAndGlyphs" fill="#dcdcdc">0.4</text>
<line x1="1164.00" y1="223.00" x2="1171.10" y2="223.00" stroke="#e0e0e0" stroke-width="1.5"/>
<text x="1131.82" y="229.30" font-size="16.63" textLength="32.37" lengthAdjust="spacingAndGlyphs" fill="#dcdcdc">0.45</text>
<line x1="1164.00" y1="175.80" x2="1171.10" y2="175.80" stroke="#e0e0e0" stroke-width="1.5"/>
<text x="1141.05" y="182.10" font-size="16.63" textLength="23.12" lengthAdjust="spacingAndGlyphs" fill="#dcdcdc">0.5</text>
<line x1="1164.00" y1="128.60" x2="1171.10" y2="128.60" stroke="#e0e0e0" stroke-width="1.5"/>
<text x="1131.82" y="134.90" font-size="16.63" textLength="32.37" lengthAdjust="spacingAndGlyphs" fill="#dcdcdc">0.55</text>
<line x1="1171.10" y1="647.80" x2="1171.10" y2="654.50" stroke="#e0e0e0" stroke-width="1.6"/>
<text x="1166.46" y="672.80" font-size="16.63" textLength="9.25" lengthAdjust="spacingAndGlyphs" fill="#dcdcdc">0</text>
<line x1="1232.55" y1="647.80" x2="1232.55" y2="654.50" stroke="#e0e0e0" stroke-width="1.6"/>
<text x="1216.38" y="672.80" font-size="16.63" textLength="32.37" lengthAdjust="spacingAndGlyphs" fill="#dcdcdc">0.05</text>
<line x1="1294.00" y1="647.80" x2="1294.00" y2="654.50" stroke="#e0e0e0" stroke-width="1.6"/>
<text x="1282.50" y="672.80" font-size="16.63" textLength="23.12" lengthAdjust="spacingAndGlyphs" fill="#dcdcdc">0.1</text>
<line x1="1355.45" y1="647.80" x2="1355.45" y2="654.50" stroke="#e0e0e0" stroke-width="1.6"/>
<text x="1339.28" y="672.80" font-size="16.63" textLength="32.37" lengthAdjust="spacingAndGlyphs" fill="#dcdcdc">0.15</text>
<line x1="1416.90" y1="647.80" x2="1416.90" y2="654.50" stroke="#e0e0e0" stroke-width="1.6"/>
<text x="1405.42" y="672.80" font-size="16.63" textLength="23.12" lengthAdjust="spacingAndGlyphs" fill="#dcdcdc">0.2</text>
<line x1="1478.35" y1="647.80" x2="1478.35" y2="654.50" stroke="#e0e0e0" stroke-width="1.6"/>
<text x="1462.18" y="672.80" font-size="16.63" textLength="32.37" lengthAdjust="spacingAndGlyphs" fill="#dcdcdc">0.25</text>
<line x1="1539.80" y1="647.80" x2="1539.80" y2="654.50" stroke="#e0e0e0" stroke-width="1.6"/>
<text x="1528.26" y="672.80" font-size="16.63" textLength="23.12" lengthAdjust="spacingAndGlyphs" fill="#dcdcdc">0.3</text>
<line x1="1601.25" y1="647.80" x2="1601.25" y2="654.50" stroke="#e0e0e0" stroke-width="1.6"/>
<text x="1585.08" y="672.80" font-size="16.63" textLength="32.37" lengthAdjust="spacingAndGlyphs" fill="#dcdcdc">0.35</text>
<line x1="1662.70" y1="647.80" x2="1662.70" y2="654.50" stroke="#e0e0e0" stroke-width="1.6"/>
<text x="1651.04" y="672.80" font-size="16.63" textLength="23.12" lengthAdjust="spacingAndGlyphs" fill="#dcdcdc">0.4</text>
<line x1="1724.15" y1="647.80" x2="1724.15" y2="654.50" stroke="#e0e0e0" stroke-width="1.6"/>
<text x="1707.98" y="672.80" font-size="16.63" textLength="32.37" lengthAdjust="spacingAndGlyphs" fill="#dcdcdc">0.45</text>
<line x1="1785.60" y1="647.80" x2="1785.60" y2="654.50" stroke="#e0e0e0" stroke-width="1.6"/>
<text x="1774.04" y="672.80" font-size="16.63" textLength="23.12" lengthAdjust="spacingAndGlyphs" fill="#dcdcdc">0.5</text>
<line x1="1847.05" y1="647.80" x2="1847.05" y2="654.50" stroke="#e0e0e0" stroke-width="1.6"/>
<text x="1830.88" y="672.80" font-size="16.63" textLength="32.37" lengthAdjust="spacingAndGlyphs" fill="#dcdcdc">0.55</text>
<text x="54.71" y="725.50" font-size="32.41" textLength="270.65" lengthAdjust="spacingAndGlyphs" fill="#f0f0f0">Avg dE2000: 4.16</text>
<text x="57.53" y="772.30" font-size="32.00" textLength="262.58" lengthAdjust="spacingAndGlyphs" fill="#f0f0f0">Max dE2000: 7.5</text>
<text x="11.45" y="827.50" font-size="32.00" textLength="256.13" lengthAdjust="spacingAndGlyphs" fill="#f0f0f0">Current Reading</text>
<text x="12.83" y="868.20" font-size="29.10" textLength="120.24" lengthAdjust="spacingAndGlyphs" fill="#f0f0f0">x: 0.4139</text>
<text x="193.63" y="868.20" font-size="29.10" textLength="119.78" lengthAdjust="spacingAndGlyphs" fill="#f0f0f0">y: 0.5032</text>
<text x="13.37" y="915.70" font-size="30.17" textLength="112.06" lengthAdjust="spacingAndGlyphs" fill="#f0f0f0">fL: 91.71</text>
<text x="12.51" y="954.60" font-size="32.41" textLength="185.26" lengthAdjust="spacingAndGlyphs" fill="#f0f0f0">cd/m²: 314.22</text>
<text x="485.78" y="727.50" font-size="17.10" textLength="97.23" lengthAdjust="spacingAndGlyphs" fill="#dcdcdc">RGB Balance</text>
<rect x="408.20" y="733.60" width="288.10" height="208.00" fill="#232323"/>
<line x1="408.20" y1="785.60" x2="696.30" y2="785.60" stroke="#8a8a8a" stroke-width="1.5"/>
<line x1="408.20" y1="837.60" x2="696.30" y2="837.60" stroke="#8a8a8a" stroke-width="1.5"/>
<line x1="408.20" y1="889.60" x2="696.30" y2="889.60" stroke="#8a8a8a" stroke-width="1.5"/>
<rect x="408.2" y="733.6" width="288.10" height="208.00" fill="none" stroke="#9a9a9a" stroke-width="1.6"/>
<line x1="400.00" y1="733.60" x2="408.20" y2="733.60" stroke="#e0e0e0" stroke-width="1.5"/>
<text x="372.26" y="739.80" font-size="17.78" textLength="28.34" lengthAdjust="spacingAndGlyphs" fill="#dcdcdc">110</text>
<line x1="400.00" y1="785.60" x2="408.20" y2="785.60" stroke="#e0e0e0" stroke-width="1.5"/>
<text x="370.97" y="791.80" font-size="17.78" textLength="29.66" lengthAdjust="spacingAndGlyphs" fill="#dcdcdc">105</text>
<line x1="400.00" y1="837.60" x2="408.20" y2="837.60" stroke="#e0e0e0" stroke-width="1.5"/>
<text x="370.92" y="843.80" font-size="17.78" textLength="29.66" lengthAdjust="spacingAndGlyphs" fill="#dcdcdc">100</text>
<line x1="400.00" y1="889.60" x2="408.20" y2="889.60" stroke="#e0e0e0" stroke-width="1.5"/>
<text x="380.88" y="895.80" font-size="17.78" textLength="19.77" lengthAdjust="spacingAndGlyphs" fill="#dcdcdc">95</text>
<line x1="400.00" y1="941.60" x2="408.20" y2="941.60" stroke="#e0e0e0" stroke-width="1.5"/>
<text x="380.83" y="947.80" font-size="17.78" textLength="19.77" lengthAdjust="spacingAndGlyphs" fill="#dcdcdc">90</text>
<line x1="408.20" y1="941.60" x2="408.20" y2="948.00" stroke="#e0e0e0" stroke-width="1.6"/>
<line x1="696.30" y1="941.60" x2="696.30" y2="948.00" stroke="#e0e0e0" stroke-width="1.6"/>
<text x="530.10" y="960.00" font-size="17.63" textLength="45.10" lengthAdjust="spacingAndGlyphs" fill="#dcdcdc">100%</text>
<rect x="436.50" y="883.80" width="74.80" height="57.80" fill="#000"/>
<rect x="437.80" y="885.10" width="72.20" height="56.50" fill="url(#rr)"/>
<rect x="512.70" y="872.50" width="76.30" height="69.10" fill="#000"/>
<rect x="514.00" y="873.80" width="73.70" height="67.80" fill="url(#rg)"/>
<rect x="589.80" y="773.70" width="76.20" height="167.90" fill="#000"/>
<rect x="591.10" y="775.00" width="73.60" height="166.60" fill="url(#rb)"/>
<rect x="719.90" y="696.80" width="842.30" height="272.00" fill="#0c0c0c"/>
<rect x="722.00" y="698.30" width="838.10" height="15.90" fill="#2e2e2e"/>
<rect x="722.00" y="714.20" width="838.10" height="15.90" fill="#161616"/>
<rect x="722.00" y="730.10" width="838.10" height="29.70" fill="#414141"/>
<rect x="722.00" y="759.80" width="838.10" height="29.70" fill="#808080"/>
<rect x="722.00" y="789.50" width="838.10" height="29.70" fill="#414141"/>
<rect x="722.00" y="819.20" width="838.10" height="29.70" fill="#808080"/>
<rect x="722.00" y="848.90" width="838.10" height="29.70" fill="#414141"/>
<rect x="722.00" y="878.60" width="838.10" height="29.70" fill="#808080"/>
<rect x="722.00" y="908.30" width="838.10" height="29.70" fill="#414141"/>
<rect x="722.00" y="938.00" width="838.10" height="29.70" fill="#808080"/>
<text x="983.72" y="720.80" font-size="17.06" textLength="47.56" lengthAdjust="spacingAndGlyphs" fill="#f2f2f2" font-weight="bold">20%</text>
<text x="1106.81" y="720.80" font-size="17.06" textLength="47.56" lengthAdjust="spacingAndGlyphs" fill="#f2f2f2" font-weight="bold">40%</text>
<text x="1229.39" y="720.80" font-size="17.06" textLength="47.56" lengthAdjust="spacingAndGlyphs" fill="#f2f2f2" font-weight="bold">60%</text>
<text x="1352.30" y="720.80" font-size="17.06" textLength="47.56" lengthAdjust="spacingAndGlyphs" fill="#f2f2f2" font-weight="bold">80%</text>
<text x="1468.20" y="720.80" font-size="17.06" textLength="60.78" lengthAdjust="spacingAndGlyphs" fill="#f2f2f2" font-weight="bold">100%</text>
<text x="742.41" y="752.50" font-size="19.35" textLength="98.81" lengthAdjust="spacingAndGlyphs" fill="#f0f0f0" font-weight="bold">x: CIE31</text>
<text x="952.77" y="752.50" font-size="19.78" textLength="78.78" lengthAdjust="spacingAndGlyphs" fill="#f0f0f0">0.3421</text>
<text x="1075.57" y="752.50" font-size="19.78" textLength="78.78" lengthAdjust="spacingAndGlyphs" fill="#f0f0f0">0.3646</text>
<text x="1198.37" y="752.50" font-size="19.78" textLength="78.78" lengthAdjust="spacingAndGlyphs" fill="#f0f0f0">0.3831</text>
<text x="1321.17" y="752.50" font-size="19.78" textLength="78.78" lengthAdjust="spacingAndGlyphs" fill="#f0f0f0">0.3980</text>
<text x="1443.97" y="752.50" font-size="19.78" textLength="78.78" lengthAdjust="spacingAndGlyphs" fill="#f0f0f0">0.4139</text>
<text x="742.41" y="782.20" font-size="19.35" textLength="98.81" lengthAdjust="spacingAndGlyphs" fill="#f0f0f0" font-weight="bold">y: CIE31</text>
<text x="952.77" y="782.20" font-size="19.78" textLength="78.78" lengthAdjust="spacingAndGlyphs" fill="#f0f0f0">0.3724</text>
<text x="1075.57" y="782.20" font-size="19.78" textLength="78.78" lengthAdjust="spacingAndGlyphs" fill="#f0f0f0">0.4127</text>
<text x="1198.37" y="782.20" font-size="19.78" textLength="78.78" lengthAdjust="spacingAndGlyphs" fill="#f0f0f0">0.4460</text>
<text x="1321.17" y="782.20" font-size="19.78" textLength="78.78" lengthAdjust="spacingAndGlyphs" fill="#f0f0f0">0.4727</text>
<text x="1443.97" y="782.20" font-size="19.78" textLength="78.78" lengthAdjust="spacingAndGlyphs" fill="#f0f0f0">0.5032</text>
<text x="742.16" y="811.90" font-size="19.35" textLength="16.70" lengthAdjust="spacingAndGlyphs" fill="#f0f0f0" font-weight="bold">Y</text>
<text x="952.83" y="811.90" font-size="19.78" textLength="107.44" lengthAdjust="spacingAndGlyphs" fill="#f0f0f0">325.7349</text>
<text x="1075.63" y="811.90" font-size="19.78" textLength="107.44" lengthAdjust="spacingAndGlyphs" fill="#f0f0f0">320.9497</text>
<text x="1198.43" y="811.90" font-size="19.78" textLength="107.44" lengthAdjust="spacingAndGlyphs" fill="#f0f0f0">317.4917</text>
<text x="1321.23" y="811.90" font-size="19.78" textLength="107.44" lengthAdjust="spacingAndGlyphs" fill="#f0f0f0">315.0787</text>
<text x="1444.03" y="811.90" font-size="19.78" textLength="107.44" lengthAdjust="spacingAndGlyphs" fill="#f0f0f0">314.2164</text>
<text x="742.35" y="841.60" font-size="19.35" textLength="173.48" lengthAdjust="spacingAndGlyphs" fill="#f0f0f0" font-weight="bold">Target x:CIE31</text>
<text x="952.77" y="841.60" font-size="19.78" textLength="78.78" lengthAdjust="spacingAndGlyphs" fill="#f0f0f0">0.3345</text>
<text x="1075.57" y="841.60" font-size="19.78" textLength="78.78" lengthAdjust="spacingAndGlyphs" fill="#f0f0f0">0.3567</text>
<text x="1198.37" y="841.60" font-size="19.78" textLength="78.78" lengthAdjust="spacingAndGlyphs" fill="#f0f0f0">0.3777</text>
<text x="1321.17" y="841.60" font-size="19.78" textLength="78.78" lengthAdjust="spacingAndGlyphs" fill="#f0f0f0">0.3973</text>
<text x="1443.97" y="841.60" font-size="19.78" textLength="78.78" lengthAdjust="spacingAndGlyphs" fill="#f0f0f0">0.4193</text>
<text x="742.35" y="871.30" font-size="19.35" textLength="173.48" lengthAdjust="spacingAndGlyphs" fill="#f0f0f0" font-weight="bold">Target y:CIE31</text>
<text x="952.77" y="871.30" font-size="19.78" textLength="78.78" lengthAdjust="spacingAndGlyphs" fill="#f0f0f0">0.3651</text>
<text x="1075.57" y="871.30" font-size="19.78" textLength="78.78" lengthAdjust="spacingAndGlyphs" fill="#f0f0f0">0.4017</text>
<text x="1198.37" y="871.30" font-size="19.78" textLength="78.78" lengthAdjust="spacingAndGlyphs" fill="#f0f0f0">0.4364</text>
<text x="1321.17" y="871.30" font-size="19.78" textLength="78.78" lengthAdjust="spacingAndGlyphs" fill="#f0f0f0">0.4689</text>
<text x="1443.97" y="871.30" font-size="19.78" textLength="78.78" lengthAdjust="spacingAndGlyphs" fill="#f0f0f0">0.5053</text>
<text x="742.35" y="901.00" font-size="19.35" textLength="97.87" lengthAdjust="spacingAndGlyphs" fill="#f0f0f0" font-weight="bold">Target Y</text>
<text x="952.83" y="901.00" font-size="19.78" textLength="107.44" lengthAdjust="spacingAndGlyphs" fill="#f0f0f0">372.3315</text>
<text x="1075.63" y="901.00" font-size="19.78" textLength="107.44" lengthAdjust="spacingAndGlyphs" fill="#f0f0f0">365.7774</text>
<text x="1198.43" y="901.00" font-size="19.78" textLength="107.44" lengthAdjust="spacingAndGlyphs" fill="#f0f0f0">360.7494</text>
<text x="1321.23" y="901.00" font-size="19.78" textLength="107.44" lengthAdjust="spacingAndGlyphs" fill="#f0f0f0">356.8135</text>
<text x="1444.03" y="901.00" font-size="19.78" textLength="107.44" lengthAdjust="spacingAndGlyphs" fill="#f0f0f0">353.0914</text>
<text x="741.60" y="930.70" font-size="19.35" textLength="97.36" lengthAdjust="spacingAndGlyphs" fill="#f0f0f0" font-weight="bold">ΔE 2000</text>
<text x="952.83" y="930.70" font-size="19.78" textLength="78.78" lengthAdjust="spacingAndGlyphs" fill="#f0f0f0">3.4849</text>
<text x="1075.63" y="930.70" font-size="19.78" textLength="78.78" lengthAdjust="spacingAndGlyphs" fill="#f0f0f0">3.2127</text>
<text x="1198.11" y="930.70" font-size="19.78" textLength="78.78" lengthAdjust="spacingAndGlyphs" fill="#f0f0f0">2.9166</text>
<text x="1320.91" y="930.70" font-size="19.78" textLength="78.78" lengthAdjust="spacingAndGlyphs" fill="#f0f0f0">2.7764</text>
<text x="1443.71" y="930.70" font-size="19.78" textLength="78.78" lengthAdjust="spacingAndGlyphs" fill="#f0f0f0">2.9844</text>
<text x="741.60" y="960.40" font-size="19.35" textLength="80.61" lengthAdjust="spacingAndGlyphs" fill="#f0f0f0" font-weight="bold">ΔE ITP</text>
<text x="951.87" y="960.40" font-size="19.78" textLength="91.20" lengthAdjust="spacingAndGlyphs" fill="#f0f0f0">11.2921</text>
<text x="1074.67" y="960.40" font-size="19.78" textLength="91.20" lengthAdjust="spacingAndGlyphs" fill="#f0f0f0">11.6644</text>
<text x="1197.47" y="960.40" font-size="19.78" textLength="91.20" lengthAdjust="spacingAndGlyphs" fill="#f0f0f0">11.1207</text>
<text x="1320.98" y="960.40" font-size="19.78" textLength="78.78" lengthAdjust="spacingAndGlyphs" fill="#f0f0f0">9.7462</text>
<text x="1443.07" y="960.40" font-size="19.78" textLength="93.11" lengthAdjust="spacingAndGlyphs" fill="#f0f0f0">10.0767</text>

<g fill="none" stroke-linejoin="miter" stroke-linecap="butt">
 <g transform="translate(1.2,1.5)" stroke="#262626" opacity="0.6">
  <path d="M1633.5,920.5 L1592.8,912.2 L1594.2,952.6 L1620.2,966.3 L1666.5,952.2 L1641.5,947.6" stroke-width="6.2"/>
 </g>
 <path d="M1633.5,920.5 L1592.8,912.2 L1594.2,952.6 L1620.2,966.3 L1666.5,952.2 L1641.5,947.6" stroke="#a4a4a4" stroke-width="6.2"/>
 <path d="M1633.5,920.5 L1592.8,912.2 L1594.2,952.6 L1620.2,966.3 L1666.5,952.2 L1641.5,947.6" stroke="#7e2327" stroke-width="3.8"/>
 <path d="M1635.3,921 L1636.8,945.6 L1602.5,948.6" stroke="#a4a4a4" stroke-width="5.4"/>
 <path d="M1635.3,921 L1636.8,945.6 L1602.5,948.6" stroke="#7e2327" stroke-width="3.2"/>
</g>
<path d="M1603.5,925.8 Q1609,921 1613.5,927 L1617.6,934.6 Q1628,918 1641.3,910.2 Q1642.5,911.5 1641.5,913 Q1628,926 1617.4,943.4 Q1612,935 1603.5,925.8 Z" fill="#2a2a2a" stroke="#a4a4a4" stroke-width="1.1"/>

<text x="1639.50" y="943.80" font-size="29.82" textLength="171.31" lengthAdjust="spacingAndGlyphs" fill="#262626" font-weight="bold" stroke="#262626" stroke-width="2.6" opacity="0.5" transform="translate(1.2,1.6)">NOTEBOOK</text>
<text x="1639.50" y="943.80" font-size="29.82" textLength="171.31" lengthAdjust="spacingAndGlyphs" fill="#7e2327" font-weight="bold" stroke="#a4a4a4" stroke-width="2.4" paint-order="stroke" stroke-linejoin="round">NOTEBOOK</text>
<text x="1812.60" y="943.80" font-size="29.82" textLength="98.27" lengthAdjust="spacingAndGlyphs" fill="#262626" stroke="#262626" stroke-width="2.4" opacity="0.5" transform="translate(1.2,1.6)">CHECK</text>
<text x="1812.60" y="943.80" font-size="29.82" textLength="98.27" lengthAdjust="spacingAndGlyphs" fill="#2a2a2a" stroke="#a4a4a4" stroke-width="2.3" paint-order="stroke" stroke-linejoin="round">CHECK</text>
</svg>
<div class="lay" style="left:1171px;top:90px;width:739px;height:546px;clip-path:polygon(315.5px 541.2px,314.9px 541.5px,314.2px 541.7px,313.3px 541.8px,312.5px 541.8px,311.6px 541.8px,311.0px 541.6px,310.3px 541.2px,309.3px 540.6px,308.7px 540.2px,308.0px 539.8px,307.4px 539.3px,306.6px 538.8px,305.9px 538.2px,305.1px 537.6px,304.2px 537.0px,303.3px 536.3px,302.3px 535.5px,301.2px 534.6px,300.1px 533.7px,298.8px 532.7px,297.5px 531.6px,296.1px 530.5px,294.7px 529.3px,293.2px 528.0px,291.7px 526.7px,290.0px 525.3px,288.3px 523.8px,286.5px 522.3px,284.6px 520.8px,282.7px 519.2px,280.6px 517.5px,278.4px 515.7px,276.0px 513.7px,273.6px 511.7px,271.0px 509.6px,268.2px 507.4px,265.4px 505.0px,262.5px 502.7px,259.5px 500.2px,256.4px 497.6px,253.2px 494.9px,249.8px 492.0px,246.3px 488.9px,242.6px 485.7px,238.7px 482.3px,234.8px 478.7px,230.6px 474.7px,226.4px 470.7px,222.0px 466.5px,217.5px 462.0px,212.7px 457.0px,207.6px 451.3px,202.0px 445.1px,196.2px 438.2px,190.0px 430.9px,183.6px 423.0px,177.0px 414.6px,170.2px 405.6px,163.1px 396.0px,155.9px 385.9px,148.4px 375.3px,140.9px 364.3px,133.3px 352.6px,125.4px 340.4px,117.5px 327.7px,109.6px 314.7px,101.8px 301.7px,94.0px 288.4px,86.2px 274.8px,78.5px 261.1px,71.1px 247.4px,64.1px 234.0px,57.6px 220.7px,51.3px 207.3px,45.4px 194.1px,39.8px 181.3px,34.7px 169.0px,29.9px 157.2px,25.5px 145.7px,21.5px 134.6px,17.9px 124.1px,14.7px 114.2px,11.9px 105.0px,9.5px 96.3px,7.5px 88.2px,5.8px 80.6px,4.4px 73.5px,3.3px 66.9px,2.5px 60.8px,2.0px 55.2px,1.8px 50.0px,1.9px 45.1px,2.2px 40.6px,2.7px 36.4px,3.5px 32.5px,4.6px 29.0px,5.8px 25.7px,7.3px 22.6px,9.0px 19.9px,10.9px 17.5px,13.0px 15.3px,15.2px 13.3px,17.6px 11.6px,20.1px 10.1px,22.8px 8.9px,25.6px 7.9px,28.5px 7.0px,31.5px 6.2px,34.6px 5.7px,37.8px 5.3px,41.0px 4.9px,44.3px 4.7px,47.7px 4.4px,51.1px 4.3px,54.6px 4.2px,58.1px 4.1px,61.6px 4.1px,65.0px 4.1px,68.5px 4.1px,72.0px 4.1px,75.5px 4.2px,79.1px 4.3px,82.7px 4.4px,86.3px 4.6px,89.9px 4.7px,93.6px 4.9px,97.4px 5.1px,101.2px 5.4px,105.1px 5.7px,109.0px 5.9px,113.0px 6.2px,117.1px 6.6px,121.2px 6.9px,125.4px 7.3px,129.7px 7.7px,134.1px 8.1px,138.5px 8.5px,143.0px 8.9px,147.6px 9.4px,152.3px 9.9px,157.1px 10.4px,162.0px 10.9px,167.0px 11.4px,172.1px 11.9px,177.4px 12.5px,182.7px 13.1px,188.1px 13.7px,193.7px 14.3px,199.3px 14.9px,205.1px 15.5px,210.9px 16.2px,216.9px 16.9px,223.1px 17.6px,229.3px 18.3px,235.7px 19.0px,242.2px 19.7px,248.9px 20.5px,255.7px 21.2px,262.5px 22.0px,269.6px 22.8px,276.7px 23.6px,284.0px 24.5px,291.4px 25.3px,298.9px 26.2px,306.6px 27.1px,314.4px 28.0px,322.3px 28.9px,330.3px 29.8px,338.4px 30.7px,346.7px 31.7px,355.1px 32.6px,363.5px 33.6px,372.1px 34.6px,380.8px 35.6px,389.5px 36.6px,398.4px 37.6px,407.2px 38.6px,416.1px 39.6px,425.1px 40.7px,434.2px 41.7px,443.2px 42.7px,452.1px 43.8px,460.9px 44.8px,469.6px 45.8px,478.3px 46.8px,487.0px 47.8px,495.6px 48.7px,504.2px 49.7px,512.8px 50.7px,521.3px 51.7px,529.7px 52.7px,537.9px 53.6px,545.9px 54.5px,553.7px 55.4px,561.4px 56.3px,568.9px 57.1px,576.2px 58.0px,583.4px 58.8px,590.4px 59.6px,597.2px 60.4px,603.7px 61.1px,610.1px 61.9px,616.3px 62.6px,622.3px 63.3px,628.0px 63.9px,633.6px 64.6px,639.0px 65.2px,644.2px 65.8px,649.2px 66.3px,654.0px 66.9px,658.6px 67.4px,663.1px 67.9px,667.5px 68.4px,671.7px 68.9px,675.7px 69.4px,679.6px 69.8px,683.5px 70.3px,687.2px 70.7px,690.9px 71.1px,694.4px 71.5px,697.8px 71.9px,701.1px 72.3px,704.3px 72.7px,707.4px 73.0px,710.4px 73.4px,713.3px 73.7px,716.1px 74.0px,718.7px 74.3px,721.2px 74.6px,723.6px 74.9px,725.9px 75.1px,728.1px 75.4px,730.2px 75.6px,732.2px 75.8px,734.0px 76.0px,735.8px 76.3px,737.5px 76.5px,739.1px 76.6px,740.7px 76.8px,742.1px 77.0px,743.5px 77.1px,744.8px 77.3px,746.0px 77.4px,747.2px 77.6px,748.3px 77.7px,749.3px 77.8px,750.3px 77.9px,751.1px 78.0px,751.8px 78.1px,753.2px 78.3px,754.5px 78.4px,755.7px 78.5px,756.7px 78.7px,757.7px 78.8px,758.6px 78.9px,759.5px 79.0px,760.4px 79.1px,761.3px 79.2px,762.2px 79.3px,763.0px 79.4px,763.9px 79.5px,764.8px 79.6px,765.5px 79.7px)">
<i style="top:0px;background:linear-gradient(90deg,#009900 0px,#059900 154px,#7c9900 238px,#999100 258px,#995400 310px,#992300 410px,#990000 628px,#990000 739px)"></i><i style="top:3px;background:linear-gradient(90deg,#009900 0px,#069900 155px,#7d9900 238px,#999300 257px,#995500 308px,#992400 406px,#990000 623px,#990000 739px)"></i><i style="top:6px;background:linear-gradient(90deg,#009900 0px,#059900 155px,#7b9900 237px,#999200 257px,#995400 308px,#992300 406px,#990000 621px,#990000 739px)"></i><i style="top:9px;background:linear-gradient(90deg,#009900 0px,#069900 156px,#7d9900 238px,#999100 257px,#995500 307px,#992300 404px,#990000 617px,#990000 739px)"></i><i style="top:12px;background:linear-gradient(90deg,#009901 0px,#059900 156px,#7c9900 237px,#999300 256px,#995600 305px,#992400 400px,#990000 611px,#990000 739px)"></i><i style="top:15px;background:linear-gradient(90deg,#009903 0px,#069900 157px,#7c9900 237px,#999200 256px,#995500 305px,#992400 400px,#990000 610px,#990000 739px)"></i><i style="top:18px;background:linear-gradient(90deg,#009906 0px,#069900 157px,#7c9900 237px,#999200 256px,#995500 305px,#992300 400px,#990000 609px,#990000 739px)"></i><i style="top:21px;background:linear-gradient(90deg,#009908 0px,#069900 158px,#7d9900 237px,#999100 256px,#995400 305px,#992300 400px,#990000 607px,#990000 739px)"></i><i style="top:24px;background:linear-gradient(90deg,#00990b 0px,#069900 158px,#7d9900 237px,#999200 255px,#995500 303px,#992400 396px,#990000 601px,#990000 739px)"></i><i style="top:27px;background:linear-gradient(90deg,#00990d 0px,#059901 158px,#7b9900 236px,#999200 255px,#995500 303px,#992300 396px,#990000 600px,#990000 739px)"></i><i style="top:30px;background:linear-gradient(90deg,#009910 0px,#069905 159px,#7c9900 236px,#999300 254px,#995600 301px,#992400 392px,#990000 594px,#990000 739px)"></i><i style="top:33px;background:linear-gradient(90deg,#009913 0px,#059908 159px,#7c9900 236px,#999200 254px,#995500 301px,#992400 392px,#990000 592px,#990000 739px)"></i><i style="top:36px;background:linear-gradient(90deg,#009915 0px,#06990c 160px,#7c9904 236px,#999202 254px,#995500 301px,#992300 392px,#990000 591px,#990000 739px)"></i><i style="top:39px;background:linear-gradient(90deg,#009918 0px,#05990f 160px,#7d9909 236px,#999306 253px,#995600 299px,#992400 388px,#990000 585px,#990000 739px)"></i><i style="top:42px;background:linear-gradient(90deg,#00991b 0px,#069913 161px,#7d990d 236px,#99930b 253px,#995503 299px,#992300 388px,#990000 584px,#990000 739px)"></i><i style="top:45px;background:linear-gradient(90deg,#00991d 0px,#059917 161px,#7b9912 235px,#99920f 253px,#995406 299px,#992300 388px,#990000 582px,#990000 739px)"></i><i style="top:48px;background:linear-gradient(90deg,#009920 0px,#06991b 162px,#7c9916 235px,#999114 253px,#995509 298px,#992301 386px,#990000 578px,#990000 739px)"></i><i style="top:51px;background:linear-gradient(90deg,#009923 0px,#06991e 162px,#7c991b 235px,#999319 252px,#99550d 297px,#992303 384px,#990000 575px,#990000 739px)"></i><i style="top:54px;background:linear-gradient(90deg,#009926 0px,#059922 162px,#7a9920 234px,#99921e 252px,#995510 296px,#992405 381px,#990000 570px,#990000 739px)"></i><i style="top:57px;background:linear-gradient(90deg,#009929 0px,#069926 163px,#7d9925 235px,#999122 252px,#995513 296px,#992307 381px,#990000 569px,#990000 739px)"></i><i style="top:60px;background:linear-gradient(90deg,#00992c 0px,#05992a 163px,#7b992a 234px,#999328 251px,#995617 294px,#992409 377px,#990000 563px,#990000 739px)"></i><i style="top:63px;background:linear-gradient(90deg,#00992e 0px,#06992f 164px,#7b992f 234px,#99922d 251px,#99551a 294px,#99240b 377px,#990000 561px,#990000 739px)"></i><i style="top:66px;background:linear-gradient(90deg,#009931 0px,#059933 164px,#7c9934 234px,#999232 251px,#99551d 294px,#99230d 377px,#990001 560px,#990000 739px)"></i><i style="top:69px;background:linear-gradient(90deg,#009934 0px,#069937 165px,#7c9939 234px,#999337 250px,#995621 292px,#992410 373px,#990002 554px,#990000 739px)"></i><i style="top:72px;background:linear-gradient(90deg,#009937 0px,#05993b 165px,#7c993e 234px,#99923c 250px,#995525 292px,#992412 373px,#990003 552px,#990000 739px)"></i><i style="top:75px;background:linear-gradient(90deg,#00993a 0px,#069940 166px,#7d9944 234px,#999242 250px,#995528 292px,#992314 373px,#990005 551px,#990000 739px)"></i><i style="top:78px;background:linear-gradient(90deg,#00993d 0px,#059944 166px,#7b9949 233px,#999348 249px,#99562d 290px,#992416 369px,#990006 545px,#990000 739px)"></i><i style="top:81px;background:linear-gradient(90deg,#009941 0px,#059949 166px,#7b994f 233px,#99934d 249px,#995530 290px,#992419 369px,#990007 544px,#990000 739px)"></i><i style="top:84px;background:linear-gradient(90deg,#009944 0px,#06994e 167px,#7c9955 233px,#999253 249px,#995434 290px,#99231b 369px,#990008 542px,#990001 739px)"></i><i style="top:87px;background:linear-gradient(90deg,#009947 0px,#059952 167px,#7c995a 233px,#999158 249px,#995437 290px,#99231d 369px,#99000a 541px,#990002 739px)"></i><i style="top:90px;background:linear-gradient(90deg,#00994a 0px,#069957 168px,#7c9960 233px,#99935f 248px,#99553c 288px,#992420 365px,#99000b 535px,#990002 739px)"></i><i style="top:93px;background:linear-gradient(90deg,#00994d 0px,#05995c 168px,#7a9966 232px,#999265 248px,#995540 287px,#992423 363px,#99000d 531px,#990003 739px)"></i><i style="top:96px;background:linear-gradient(90deg,#009951 0px,#069961 169px,#7d996d 233px,#99916a 248px,#995544 287px,#992325 363px,#99000e 530px,#990004 739px)"></i><i style="top:99px;background:linear-gradient(90deg,#009954 0px,#059966 169px,#7b9973 232px,#999372 247px,#995649 285px,#992428 359px,#990010 524px,#990005 739px)"></i><i style="top:102px;background:linear-gradient(90deg,#009957 0px,#06996c 170px,#7c9979 232px,#999278 247px,#99554d 285px,#99242b 359px,#990011 522px,#990005 739px)"></i><i style="top:105px;background:linear-gradient(90deg,#00995b 0px,#059971 170px,#7c9980 232px,#99917e 247px,#995551 285px,#99232d 359px,#990012 521px,#990006 739px)"></i><i style="top:108px;background:linear-gradient(90deg,#00995e 0px,#059976 170px,#7a9986 231px,#999386 246px,#995657 283px,#992430 355px,#990014 515px,#990007 739px)"></i><i style="top:111px;background:linear-gradient(90deg,#009962 0px,#06997c 171px,#7d998d 232px,#99928c 246px,#99555b 283px,#992433 355px,#990016 513px,#990008 739px)"></i><i style="top:114px;background:linear-gradient(90deg,#009965 0px,#059982 171px,#7b9994 231px,#999292 246px,#99555f 283px,#992335 355px,#990017 512px,#990008 739px)"></i><i style="top:117px;background:linear-gradient(90deg,#009969 0px,#069988 172px,#999199 246px,#995463 283px,#992238 355px,#990018 511px,#990009 739px)"></i><i style="top:120px;background:linear-gradient(90deg,#00996c 0px,#05998d 172px,#7e8e99 236px,#998293 252px,#99485d 294px,#991932 378px,#990018 530px,#99000a 739px)"></i><i style="top:123px;background:linear-gradient(90deg,#009970 0px,#069994 173px,#997c93 255px,#99435d 299px,#991531 389px,#990018 535px,#99000b 739px)"></i><i style="top:126px;background:linear-gradient(90deg,#009974 0px,#059899 173px,#997593 258px,#993d5b 305px,#99112f 403px,#990019 540px,#99000c 739px)"></i><i style="top:129px;background:linear-gradient(90deg,#009977 0px,#069299 174px,#996f94 261px,#99395c 309px,#990f30 409px,#99001a 543px,#99000c 739px)"></i><i style="top:132px;background:linear-gradient(90deg,#00997b 0px,#009299 157px,#088c99 176px,#996994 264px,#99365c 313px,#990d30 415px,#99001a 548px,#99000d 739px)"></i><i style="top:135px;background:linear-gradient(90deg,#00997f 0px,#009299 141px,#078799 176px,#996494 267px,#99325c 318px,#990a30 424px,#99001a 566px,#99000e 739px)"></i><i style="top:138px;background:linear-gradient(90deg,#009983 0px,#009299 125px,#068299 176px,#995e94 270px,#992e5c 322px,#990830 430px,#990018 600px,#99000f 739px)"></i><i style="top:141px;background:linear-gradient(90deg,#009987 0px,#009199 110px,#057d99 176px,#995994 273px,#992b5d 326px,#990730 437px,#990010 732px,#99000f 739px)"></i><i style="top:144px;background:linear-gradient(90deg,#00998b 0px,#009099 98px,#067999 177px,#995393 277px,#99275b 332px,#990430 447px,#990010 739px)"></i><i style="top:147px;background:linear-gradient(90deg,#00998f 0px,#008c99 93px,#067499 178px,#994f93 280px,#99245b 337px,#99022f 456px,#990011 739px)"></i><i style="top:150px;background:linear-gradient(90deg,#009993 0px,#007299 173px,#994b93 283px,#99225c 341px,#99012f 462px,#990012 739px)"></i><i style="top:153px;background:linear-gradient(90deg,#009997 0px,#066c99 179px,#994793 286px,#991f5c 345px,#990030 468px,#990012 739px)"></i><i style="top:156px;background:linear-gradient(90deg,#009799 0px,#056899 179px,#994394 289px,#991c5c 350px,#99002f 477px,#990013 739px)"></i><i style="top:159px;background:linear-gradient(90deg,#009399 0px,#066599 180px,#993f94 292px,#991a5c 354px,#990030 483px,#990014 739px)"></i><i style="top:162px;background:linear-gradient(90deg,#008f99 0px,#056199 180px,#993c94 295px,#99185c 358px,#990030 487px,#990015 739px)"></i><i style="top:165px;background:linear-gradient(90deg,#008b99 0px,#065e99 181px,#993894 298px,#99155c 363px,#990032 488px,#990016 739px)"></i><i style="top:168px;background:linear-gradient(90deg,#008899 0px,#065b99 182px,#993493 302px,#99135b 369px,#990033 488px,#990016 739px)"></i><i style="top:171px;background:linear-gradient(90deg,#008499 0px,#055899 182px,#993193 305px,#99115b 373px,#990035 488px,#990017 739px)"></i><i style="top:174px;background:linear-gradient(90deg,#008199 0px,#065599 183px,#992e93 308px,#990f5c 377px,#990036 489px,#990018 739px)"></i><i style="top:177px;background:linear-gradient(90deg,#007e99 0px,#055299 183px,#992b93 311px,#990d5b 382px,#990036 493px,#990019 739px)"></i><i style="top:180px;background:linear-gradient(90deg,#007b99 0px,#064f99 184px,#992993 314px,#990b5c 386px,#990037 499px,#990019 739px)"></i><i style="top:183px;background:linear-gradient(90deg,#007899 0px,#064d99 185px,#992694 317px,#990a5c 390px,#990035 514px,#99001a 739px)"></i><i style="top:186px;background:linear-gradient(90deg,#007599 0px,#064a99 185px,#992394 320px,#99085c 395px,#990030 551px,#99001b 739px)"></i><i style="top:189px;background:linear-gradient(90deg,#007299 0px,#064899 186px,#992194 323px,#99065c 399px,#990030 557px,#99001c 739px)"></i><i style="top:192px;background:linear-gradient(90deg,#006f99 0px,#054699 186px,#991e93 327px,#99045b 405px,#99002f 568px,#99001d 739px)"></i><i style="top:195px;background:linear-gradient(90deg,#006d99 0px,#064399 187px,#991c93 330px,#99035b 409px,#99002f 574px,#99001d 739px)"></i><i style="top:198px;background:linear-gradient(90deg,#006a99 0px,#064199 188px,#991a93 333px,#99015b 414px,#99002f 583px,#99001e 739px)"></i><i style="top:201px;background:linear-gradient(90deg,#006899 0px,#063f99 188px,#991793 336px,#99005b 418px,#99002f 589px,#99001f 739px)"></i><i style="top:204px;background:linear-gradient(90deg,#006699 0px,#063d99 189px,#991593 339px,#99005c 422px,#99002f 596px,#990020 739px)"></i><i style="top:207px;background:linear-gradient(90deg,#006399 0px,#053b99 189px,#991393 342px,#99005b 427px,#99002f 604px,#990021 739px)"></i><i style="top:210px;background:linear-gradient(90deg,#006199 0px,#063999 190px,#991194 345px,#99005c 431px,#990030 610px,#990021 739px)"></i><i style="top:213px;background:linear-gradient(90deg,#005f99 0px,#063799 191px,#991094 348px,#99005c 435px,#990030 617px,#990022 739px)"></i><i style="top:216px;background:linear-gradient(90deg,#005d99 0px,#063699 191px,#990d93 352px,#99005b 442px,#99002f 630px,#990023 739px)"></i><i style="top:219px;background:linear-gradient(90deg,#005b99 0px,#063499 192px,#990c93 355px,#99005b 446px,#99002f 636px,#990024 739px)"></i><i style="top:222px;background:linear-gradient(90deg,#005999 0px,#053299 192px,#990a93 358px,#99005b 450px,#99002f 642px,#990025 739px)"></i><i style="top:225px;background:linear-gradient(90deg,#005799 0px,#063199 193px,#990893 361px,#99005b 454px,#99002f 649px,#990025 739px)"></i><i style="top:228px;background:linear-gradient(90deg,#005599 0px,#062f99 194px,#990793 364px,#99005b 459px,#99002f 657px,#990026 739px)"></i><i style="top:231px;background:linear-gradient(90deg,#005399 0px,#062d99 194px,#990593 367px,#99005b 463px,#99002f 663px,#990027 739px)"></i><i style="top:234px;background:linear-gradient(90deg,#005299 0px,#062c99 195px,#990493 370px,#99005c 467px,#99002f 670px,#990028 739px)"></i><i style="top:237px;background:linear-gradient(90deg,#005099 0px,#062b99 195px,#990294 373px,#99005b 472px,#99002f 678px,#990029 739px)"></i><i style="top:240px;background:linear-gradient(90deg,#004e99 0px,#062999 196px,#990193 377px,#99005b 478px,#99002f 689px,#99002a 739px)"></i><i style="top:243px;background:linear-gradient(90deg,#004d99 0px,#062899 197px,#990093 380px,#99005b 482px,#99002f 695px,#99002a 739px)"></i><i style="top:246px;background:linear-gradient(90deg,#004b99 0px,#062799 197px,#990093 383px,#99005b 486px,#99002f 702px,#99002b 739px)"></i><i style="top:249px;background:linear-gradient(90deg,#004a99 0px,#062599 198px,#990093 386px,#99005b 491px,#99002f 710px,#99002c 739px)"></i><i style="top:252px;background:linear-gradient(90deg,#004899 0px,#062499 198px,#990093 389px,#99005b 495px,#99002f 716px,#99002d 739px)"></i><i style="top:255px;background:linear-gradient(90deg,#004799 0px,#062399 199px,#990093 392px,#99005b 499px,#99002f 723px,#99002e 739px)"></i><i style="top:258px;background:linear-gradient(90deg,#004599 0px,#062199 200px,#990093 395px,#99005b 504px,#99002f 731px,#99002e 739px)"></i><i style="top:261px;background:linear-gradient(90deg,#004499 0px,#062099 200px,#990097 394px,#99005e 500px,#990031 720px,#99002f 739px)"></i><i style="top:264px;background:linear-gradient(90deg,#004399 0px,#061f99 201px,#970099 392px,#99005d 507px,#990031 733px,#990030 739px)"></i><i style="top:267px;background:linear-gradient(90deg,#004199 0px,#061e99 201px,#930099 390px,#990059 525px,#990031 739px)"></i><i style="top:270px;background:linear-gradient(90deg,#004099 0px,#061d99 202px,#8f0099 388px,#99008a 420px,#990054 546px,#990032 739px)"></i><i style="top:273px;background:linear-gradient(90deg,#003f99 0px,#061c99 203px,#8b0099 386px,#99008f 417px,#990058 539px,#990033 739px)"></i><i style="top:276px;background:linear-gradient(90deg,#003d99 0px,#061b99 203px,#880099 384px,#990090 418px,#990059 539px,#990033 739px)"></i><i style="top:279px;background:linear-gradient(90deg,#003c99 0px,#061a99 204px,#840099 382px,#990091 420px,#99005a 541px,#990034 739px)"></i><i style="top:282px;background:linear-gradient(90deg,#003b99 0px,#061999 204px,#810099 380px,#990092 422px,#99005a 544px,#990035 739px)"></i><i style="top:285px;background:linear-gradient(90deg,#003a99 0px,#061899 205px,#7d0099 378px,#990092 425px,#99005a 548px,#990036 739px)"></i><i style="top:288px;background:linear-gradient(90deg,#003999 0px,#061799 206px,#7a0099 376px,#990092 428px,#99005b 552px,#990037 739px)"></i><i style="top:291px;background:linear-gradient(90deg,#003899 0px,#061699 206px,#770099 374px,#990092 431px,#99005a 557px,#990038 739px)"></i><i style="top:294px;background:linear-gradient(90deg,#003799 0px,#061599 207px,#730099 372px,#990092 434px,#99005b 561px,#990038 739px)"></i><i style="top:297px;background:linear-gradient(90deg,#003599 0px,#061499 208px,#710099 371px,#990092 437px,#99005b 565px,#990039 739px)"></i><i style="top:300px;background:linear-gradient(90deg,#003499 0px,#061499 208px,#6e0099 369px,#990092 440px,#99005b 570px,#99003a 739px)"></i><i style="top:303px;background:linear-gradient(90deg,#003399 0px,#061399 209px,#6c0099 368px,#990093 443px,#99005b 574px,#99003b 739px)"></i><i style="top:306px;background:linear-gradient(90deg,#003299 0px,#061299 209px,#6a0099 367px,#990093 446px,#99005b 578px,#99003c 739px)"></i><i style="top:309px;background:linear-gradient(90deg,#003199 0px,#061199 210px,#670099 366px,#990093 449px,#99005b 583px,#99003d 739px)"></i><i style="top:312px;background:linear-gradient(90deg,#003099 0px,#061099 211px,#650099 365px,#990093 452px,#99005b 587px,#99003d 739px)"></i><i style="top:315px;background:linear-gradient(90deg,#003099 0px,#061099 211px,#630099 364px,#990093 455px,#99005b 591px,#99003e 739px)"></i><i style="top:318px;background:linear-gradient(90deg,#002f99 0px,#060f99 212px,#620099 364px,#990092 459px,#99005b 597px,#99003f 739px)"></i><i style="top:321px;background:linear-gradient(90deg,#002e99 0px,#060e99 212px,#600099 363px,#990092 462px,#99005b 602px,#990040 739px)"></i><i style="top:324px;background:linear-gradient(90deg,#002d99 0px,#060e99 213px,#5f0099 364px,#990092 465px,#99005b 606px,#990041 739px)"></i><i style="top:327px;background:linear-gradient(90deg,#002c99 0px,#060d99 214px,#5e0099 365px,#990093 468px,#99005b 610px,#990042 739px)"></i><i style="top:330px;background:linear-gradient(90deg,#002b99 0px,#060c99 214px,#5e0099 366px,#990093 471px,#99005b 615px,#990043 739px)"></i><i style="top:333px;background:linear-gradient(90deg,#002a99 0px,#060b99 215px,#5e0099 368px,#990093 474px,#99005b 619px,#990043 739px)"></i><i style="top:336px;background:linear-gradient(90deg,#002999 0px,#060b99 215px,#5e0099 371px,#990093 477px,#99005b 623px,#990044 739px)"></i><i style="top:339px;background:linear-gradient(90deg,#002999 0px,#060a99 216px,#610099 377px,#990093 480px,#99005b 628px,#990045 739px)"></i><i style="top:342px;background:linear-gradient(90deg,#002899 0px,#060999 217px,#650099 387px,#990092 484px,#99005a 634px,#990046 739px)"></i><i style="top:345px;background:linear-gradient(90deg,#002799 0px,#060999 217px,#6a0099 398px,#990092 487px,#99005b 638px,#990047 739px)"></i><i style="top:348px;background:linear-gradient(90deg,#002699 0px,#060899 218px,#770099 422px,#990092 491px,#99005a 644px,#990048 739px)"></i><i style="top:351px;background:linear-gradient(90deg,#002699 0px,#060899 218px,#890099 455px,#990090 498px,#990059 656px,#990049 739px)"></i><i style="top:354px;background:linear-gradient(90deg,#002599 0px,#060799 219px,#990093 495px,#99005b 649px,#99004a 739px)"></i><i style="top:357px;background:linear-gradient(90deg,#002499 0px,#060699 220px,#990093 498px,#99005b 653px,#99004a 739px)"></i><i style="top:360px;background:linear-gradient(90deg,#002399 0px,#060699 220px,#990093 502px,#99005b 660px,#99004b 739px)"></i><i style="top:363px;background:linear-gradient(90deg,#002399 0px,#060599 221px,#990093 505px,#99005b 664px,#99004c 739px)"></i><i style="top:366px;background:linear-gradient(90deg,#002299 0px,#060599 221px,#990093 508px,#99005b 668px,#99004d 739px)"></i><i style="top:369px;background:linear-gradient(90deg,#002199 0px,#060499 222px,#990093 511px,#99005b 673px,#99004e 739px)"></i><i style="top:372px;background:linear-gradient(90deg,#002199 0px,#060499 223px,#990093 514px,#99005b 677px,#99004f 739px)"></i><i style="top:375px;background:linear-gradient(90deg,#002099 0px,#060399 223px,#990093 517px,#99005b 681px,#990050 739px)"></i><i style="top:378px;background:linear-gradient(90deg,#001f99 0px,#060399 224px,#990093 520px,#99005b 685px,#990051 739px)"></i><i style="top:381px;background:linear-gradient(90deg,#001f99 0px,#060299 225px,#990093 523px,#99005b 690px,#990051 739px)"></i><i style="top:384px;background:linear-gradient(90deg,#001e99 0px,#060299 225px,#990093 526px,#99005b 694px,#990052 739px)"></i><i style="top:387px;background:linear-gradient(90deg,#001e99 0px,#060199 226px,#990093 530px,#99005b 700px,#990053 739px)"></i><i style="top:390px;background:linear-gradient(90deg,#001d99 0px,#060199 226px,#990093 533px,#99005b 705px,#990054 739px)"></i><i style="top:393px;background:linear-gradient(90deg,#001c99 0px,#060099 227px,#990093 536px,#99005b 709px,#990055 739px)"></i><i style="top:396px;background:linear-gradient(90deg,#001c99 0px,#060099 228px,#990093 539px,#99005b 713px,#990056 739px)"></i><i style="top:399px;background:linear-gradient(90deg,#001b99 0px,#060099 228px,#990093 542px,#99005b 718px,#990057 739px)"></i><i style="top:402px;background:linear-gradient(90deg,#001b99 0px,#060099 229px,#990093 545px,#99005b 722px,#990058 739px)"></i><i style="top:405px;background:linear-gradient(90deg,#001a99 0px,#060099 229px,#990093 548px,#99005b 726px,#990059 739px)"></i><i style="top:408px;background:linear-gradient(90deg,#001a99 0px,#060099 230px,#990093 551px,#99005b 730px,#99005a 739px)"></i><i style="top:411px;background:linear-gradient(90deg,#001999 0px,#060099 231px,#990093 555px,#99005b 737px,#99005a 739px)"></i><i style="top:414px;background:linear-gradient(90deg,#001899 0px,#060099 231px,#990093 558px,#99005b 739px)"></i><i style="top:417px;background:linear-gradient(90deg,#001899 0px,#060099 232px,#990093 561px,#99005c 739px)"></i><i style="top:420px;background:linear-gradient(90deg,#001799 0px,#060099 232px,#990093 564px,#99005d 739px)"></i><i style="top:423px;background:linear-gradient(90deg,#001799 0px,#060099 233px,#990093 567px,#99005e 739px)"></i><i style="top:426px;background:linear-gradient(90deg,#001699 0px,#060099 234px,#990093 570px,#99005f 739px)"></i><i style="top:429px;background:linear-gradient(90deg,#001699 0px,#060099 234px,#990093 573px,#990060 739px)"></i><i style="top:432px;background:linear-gradient(90deg,#001599 0px,#060099 235px,#990093 576px,#990061 739px)"></i><i style="top:435px;background:linear-gradient(90deg,#001599 0px,#060099 235px,#990093 580px,#990062 739px)"></i><i style="top:438px;background:linear-gradient(90deg,#001499 0px,#060099 236px,#990093 583px,#990063 739px)"></i><i style="top:441px;background:linear-gradient(90deg,#001499 0px,#060099 237px,#990093 586px,#990064 739px)"></i><i style="top:444px;background:linear-gradient(90deg,#001499 0px,#060099 237px,#990093 589px,#990064 739px)"></i><i style="top:447px;background:linear-gradient(90deg,#001399 0px,#060099 238px,#990093 592px,#990065 739px)"></i><i style="top:450px;background:linear-gradient(90deg,#001399 0px,#060099 239px,#990093 595px,#990066 739px)"></i><i style="top:453px;background:linear-gradient(90deg,#001299 0px,#060099 239px,#990093 598px,#990067 739px)"></i><i style="top:456px;background:linear-gradient(90deg,#001299 0px,#060099 240px,#990093 601px,#990068 739px)"></i><i style="top:459px;background:linear-gradient(90deg,#001199 0px,#060099 240px,#990093 605px,#990069 739px)"></i><i style="top:462px;background:linear-gradient(90deg,#001199 0px,#060099 241px,#990093 608px,#99006a 739px)"></i><i style="top:465px;background:linear-gradient(90deg,#001099 0px,#060099 242px,#990093 611px,#99006b 739px)"></i><i style="top:468px;background:linear-gradient(90deg,#001099 0px,#060099 242px,#990093 614px,#99006c 739px)"></i><i style="top:471px;background:linear-gradient(90deg,#001099 0px,#060099 243px,#990093 617px,#99006d 739px)"></i><i style="top:474px;background:linear-gradient(90deg,#000f99 0px,#060099 243px,#990093 620px,#99006e 739px)"></i><i style="top:477px;background:linear-gradient(90deg,#000f99 0px,#060099 244px,#990093 623px,#99006f 739px)"></i><i style="top:480px;background:linear-gradient(90deg,#000e99 0px,#060099 245px,#990093 626px,#990070 739px)"></i><i style="top:483px;background:linear-gradient(90deg,#000e99 0px,#060099 245px,#990093 630px,#990071 739px)"></i><i style="top:486px;background:linear-gradient(90deg,#000e99 0px,#060099 245px,#990093 633px,#990072 739px)"></i><i style="top:489px;background:linear-gradient(90deg,#000d99 0px,#060099 245px,#990093 636px,#990073 739px)"></i><i style="top:492px;background:linear-gradient(90deg,#000d99 0px,#060099 246px,#990093 639px,#990073 739px)"></i><i style="top:495px;background:linear-gradient(90deg,#000d99 0px,#060099 246px,#990093 642px,#990074 739px)"></i><i style="top:498px;background:linear-gradient(90deg,#000c99 0px,#060099 248px,#990093 645px,#990075 739px)"></i><i style="top:501px;background:linear-gradient(90deg,#000c99 0px,#060099 249px,#990093 648px,#990076 739px)"></i><i style="top:504px;background:linear-gradient(90deg,#000b99 0px,#060099 249px,#990093 651px,#990077 739px)"></i><i style="top:507px;background:linear-gradient(90deg,#000b99 0px,#060099 250px,#990093 655px,#990078 739px)"></i><i style="top:510px;background:linear-gradient(90deg,#000b99 0px,#060099 251px,#990093 658px,#990079 739px)"></i><i style="top:513px;background:linear-gradient(90deg,#000a99 0px,#060099 251px,#990093 661px,#99007a 739px)"></i><i style="top:516px;background:linear-gradient(90deg,#000a99 0px,#060099 252px,#990093 664px,#99007b 739px)"></i><i style="top:519px;background:linear-gradient(90deg,#000a99 0px,#060099 253px,#990093 667px,#99007c 739px)"></i><i style="top:522px;background:linear-gradient(90deg,#000999 0px,#060099 253px,#990093 670px,#99007d 739px)"></i><i style="top:525px;background:linear-gradient(90deg,#000999 0px,#060099 254px,#990093 673px,#99007e 739px)"></i><i style="top:528px;background:linear-gradient(90deg,#000999 0px,#060099 254px,#990093 676px,#99007f 739px)"></i><i style="top:531px;background:linear-gradient(90deg,#000899 0px,#060099 255px,#990093 680px,#990080 739px)"></i><i style="top:534px;background:linear-gradient(90deg,#000899 0px,#060099 256px,#990093 683px,#990081 739px)"></i><i style="top:537px;background:linear-gradient(90deg,#000899 0px,#060099 256px,#990093 686px,#990082 739px)"></i><i style="top:540px;background:linear-gradient(90deg,#000899 0px,#060099 257px,#990093 689px,#990083 739px)"></i><i style="top:543px;background:linear-gradient(90deg,#000799 0px,#060099 257px,#990093 692px,#990084 739px)"></i>
<div class="lay" style="left:149px;top:24px;width:408px;height:388px;clip-path:polygon(404.6px 40.2px,4.6px 2.9px,66.5px 384.1px)"><i style="top:0px;height:2px;background:linear-gradient(90deg,#00ff00 0px,#04ff00 5px,#66ff00 41px,#fffb00 104px,#ffb200 141px,#ff7000 200px,#ff3400 303px,#ff0d00 408px)"></i><i style="top:2px;height:2px;background:linear-gradient(90deg,#00ff03 0px,#07ff00 6px,#7bff00 50px,#fffb00 104px,#ffb300 140px,#ff7100 198px,#ff3500 299px,#ff0d00 408px)"></i><i style="top:4px;height:2px;background:linear-gradient(90deg,#00ff0a 0px,#06ff09 6px,#71ff00 46px,#fffa00 104px,#ffb200 140px,#ff7100 198px,#ff3400 300px,#ff0c00 408px)"></i><i style="top:6px;height:2px;background:linear-gradient(90deg,#00ff11 0px,#04ff0f 6px,#67ff04 42px,#fffc00 103px,#ffb300 139px,#ff7200 196px,#ff3500 296px,#ff0c00 408px)"></i><i style="top:8px;height:2px;background:linear-gradient(90deg,#00ff17 0px,#03ff15 6px,#5aff0d 37px,#ddff00 89px,#fff900 104px,#ffb100 140px,#ff7000 198px,#ff3300 300px,#ff0b00 408px)"></i><i style="top:10px;height:2px;background:linear-gradient(90deg,#00ff1c 0px,#06ff1b 7px,#73ff11 47px,#fffb00 103px,#ffb200 139px,#ff7100 196px,#ff3400 296px,#ff0a00 408px)"></i><i style="top:12px;height:2px;background:linear-gradient(90deg,#00ff21 0px,#04ff20 7px,#69ff19 43px,#fffb06 103px,#ffb100 139px,#ff7000 196px,#ff3300 296px,#ff0a00 408px)"></i><i style="top:14px;height:2px;background:linear-gradient(90deg,#00ff27 0px,#03ff25 7px,#5cff20 38px,#fffa0f 103px,#ffb200 138px,#ff7000 195px,#ff3400 294px,#ff0900 408px)"></i><i style="top:16px;height:2px;background:linear-gradient(90deg,#00ff2c 0px,#06ff2a 8px,#74ff24 48px,#fffc17 102px,#ffb308 137px,#ff7200 192px,#ff3500 289px,#ff0800 408px)"></i><i style="top:18px;height:2px;background:linear-gradient(90deg,#00ff30 0px,#05ff2f 8px,#6aff2a 44px,#fffc1e 102px,#ffb30e 137px,#ff7100 193px,#ff3400 291px,#ff0800 408px)"></i><i style="top:20px;height:2px;background:linear-gradient(90deg,#00ff35 0px,#03ff34 8px,#5dff30 39px,#fffb25 102px,#ffb214 137px,#ff7002 193px,#ff3300 291px,#ff0700 408px)"></i><i style="top:22px;height:2px;background:linear-gradient(90deg,#00ff3a 0px,#06ff39 9px,#76ff34 49px,#fffb2b 102px,#ffb219 137px,#ff7008 193px,#ff3d00 269px,#ff0600 408px)"></i><i style="top:24px;height:2px;background:linear-gradient(90deg,#00ff3f 0px,#05ff3e 9px,#69ff3a 44px,#fffa32 102px,#ffb31f 136px,#ff710d 191px,#ff3a00 274px,#ff0600 408px)"></i><i style="top:26px;height:2px;background:linear-gradient(90deg,#00ff43 0px,#03ff43 9px,#5eff40 40px,#fffd39 101px,#ffb424 135px,#ff7212 189px,#ff3500 283px,#ff0500 408px)"></i><i style="top:28px;height:2px;background:linear-gradient(90deg,#00ff48 0px,#01ff48 9px,#51ff46 35px,#fffc3f 101px,#ffb329 135px,#ff7116 189px,#ff3500 283px,#ff0400 408px)"></i><i style="top:30px;height:2px;background:linear-gradient(90deg,#00ff4d 0px,#05ff4c 10px,#6bff4a 45px,#fffb45 101px,#ffb22e 135px,#ff711a 189px,#ff3405 284px,#ff0300 408px)"></i><i style="top:32px;height:2px;background:linear-gradient(90deg,#00ff51 0px,#03ff51 10px,#60ff4f 41px,#fffb4b 101px,#ffb233 135px,#ff701d 189px,#ff3308 284px,#ff0800 394px,#ff0200 408px)"></i><i style="top:34px;height:2px;background:linear-gradient(90deg,#00ff56 0px,#01ff56 10px,#52ff55 36px,#fffa50 101px,#ffb338 134px,#ff7122 187px,#ff340c 280px,#ff0600 397px,#ff0100 408px)"></i><i style="top:36px;height:2px;background:linear-gradient(90deg,#00ff5a 0px,#05ff5a 11px,#6cff5a 46px,#fffd57 100px,#ffb43d 133px,#ff7226 186px,#ff350f 278px,#ff0000 408px)"></i><i style="top:38px;height:2px;background:linear-gradient(90deg,#00ff5f 0px,#04ff5f 11px,#61ff5f 42px,#fffc5d 100px,#ffb342 133px,#ff7129 186px,#ff3412 278px,#ff0000 408px)"></i><i style="top:40px;height:2px;background:linear-gradient(90deg,#00ff64 0px,#02ff64 11px,#53ff64 37px,#fffb63 100px,#ffb246 133px,#ff702c 186px,#ff3415 278px,#ff0001 408px)"></i><i style="top:42px;height:2px;background:linear-gradient(90deg,#00ff68 0px,#05ff68 12px,#6eff69 47px,#fffb68 100px,#ffb24b 133px,#ff7030 186px,#ff3318 278px,#ff0004 408px)"></i><i style="top:44px;height:2px;background:linear-gradient(90deg,#00ff6d 0px,#04ff6d 12px,#63ff6e 43px,#fffa6e 100px,#ffb350 132px,#ff7134 184px,#ff341b 275px,#ff0007 408px)"></i><i style="top:46px;height:2px;background:linear-gradient(90deg,#00ff71 0px,#02ff72 12px,#55ff73 38px,#fffd75 99px,#ffb455 131px,#ff7238 182px,#ff351e 271px,#ff0009 408px)"></i><i style="top:48px;height:2px;background:linear-gradient(90deg,#00ff76 0px,#00ff76 12px,#49ff77 34px,#fffc7b 99px,#ffb359 131px,#ff713c 182px,#ff3521 271px,#ff000b 408px)"></i><i style="top:50px;height:2px;background:linear-gradient(90deg,#00ff7a 0px,#04ff7b 13px,#65ff7d 44px,#fffc80 99px,#ffb25e 131px,#ff713f 182px,#ff3423 271px,#ff000d 407px,#ff000d 408px)"></i><i style="top:52px;height:2px;background:linear-gradient(90deg,#00ff7f 0px,#02ff80 13px,#56ff82 39px,#fffb86 99px,#ffb262 131px,#ff7042 182px,#ff3326 271px,#ff0010 405px,#ff000f 408px)"></i><i style="top:54px;height:2px;background:linear-gradient(90deg,#00ff83 0px,#00ff84 13px,#4aff86 35px,#fffa8b 99px,#ffb166 131px,#ff6f45 182px,#ff3328 271px,#ff0012 403px,#ff0011 408px)"></i><i style="top:56px;height:2px;background:linear-gradient(90deg,#00ff88 0px,#04ff89 14px,#66ff8c 45px,#fffd93 98px,#ffb46c 129px,#ff724a 179px,#ff352c 266px,#ff0014 401px,#ff0013 408px)"></i><i style="top:58px;height:2px;background:linear-gradient(90deg,#00ff8c 0px,#02ff8e 14px,#58ff91 40px,#fffc98 98px,#ffb371 129px,#ff724e 178px,#ff352e 264px,#ff0016 399px,#ff0015 408px)"></i><i style="top:60px;height:2px;background:linear-gradient(90deg,#00ff91 0px,#00ff92 14px,#49ff95 35px,#fffc9e 98px,#ffb375 129px,#ff7151 178px,#ff3531 264px,#ff0018 397px,#ff0017 408px)"></i><i style="top:62px;height:2px;background:linear-gradient(90deg,#00ff95 0px,#04ff97 15px,#68ff9c 46px,#fffba3 98px,#ffb279 129px,#ff7154 178px,#ff3433 264px,#ff001a 395px,#ff0018 408px)"></i><i style="top:64px;height:2px;background:linear-gradient(90deg,#00ff9a 0px,#02ff9c 15px,#59ffa0 41px,#fffaa9 98px,#ffb17d 129px,#ff7057 178px,#ff3335 264px,#ff001c 393px,#ff001a 408px)"></i><i style="top:66px;height:2px;background:linear-gradient(90deg,#00ff9e 0px,#00ffa1 15px,#47ffa4 35px,#fffdb1 97px,#ffb484 127px,#ff725c 175px,#ff3539 259px,#ff001e 391px,#ff001c 408px)"></i><i style="top:68px;height:2px;background:linear-gradient(90deg,#00ffa3 0px,#04ffa6 16px,#67ffac 46px,#fffcb6 97px,#ffb388 127px,#ff7260 175px,#ff353c 259px,#ff0020 389px,#ff001e 408px)"></i><i style="top:70px;height:2px;background:linear-gradient(90deg,#00ffa8 0px,#03ffab 16px,#5bffb0 42px,#fffcbc 97px,#ffb38d 127px,#ff7163 175px,#ff343e 259px,#ff0022 387px,#ff001f 408px)"></i><i style="top:72px;height:2px;background:linear-gradient(90deg,#00ffac 0px,#00ffaf 16px,#48ffb4 36px,#fffbc1 97px,#ffb291 127px,#ff7066 175px,#ff3340 259px,#ff0024 385px,#ff0021 408px)"></i><i style="top:74px;height:2px;background:linear-gradient(90deg,#00ffb1 0px,#05ffb4 17px,#69ffbc 47px,#fffac7 97px,#ffb195 127px,#ff6f69 175px,#ff3342 259px,#ff0026 383px,#ff0023 408px)"></i><i style="top:76px;height:2px;background:linear-gradient(90deg,#00ffb6 0px,#03ffb9 17px,#5cffc0 43px,#fffacd 97px,#ffb29b 126px,#ff716e 173px,#ff3446 255px,#ff0028 381px,#ff0024 408px)"></i><i style="top:78px;height:2px;background:linear-gradient(90deg,#00ffba 0px,#00ffbe 17px,#49ffc3 37px,#fffcd5 96px,#ffb4a0 125px,#ff7272 171px,#ff364a 251px,#ff002b 378px,#ff0026 408px)"></i><i style="top:80px;height:2px;background:linear-gradient(90deg,#00ffbf 0px,#05ffc3 18px,#6bffcc 48px,#fffcdb 96px,#ffb3a5 125px,#ff7176 171px,#ff344c 252px,#ff002d 376px,#ff0027 408px)"></i><i style="top:82px;height:2px;background:linear-gradient(90deg,#00ffc4 0px,#03ffc8 18px,#5effd0 44px,#fffbe0 96px,#ffb2a9 125px,#ff7179 171px,#ff344e 252px,#ff002f 374px,#ff0029 408px)"></i><i style="top:84px;height:2px;background:linear-gradient(90deg,#00ffc8 0px,#01ffcd 18px,#4effd4 39px,#fffbe6 96px,#ffb1ad 125px,#ff707c 171px,#ff3350 252px,#ff0031 372px,#ff002a 408px)"></i><i style="top:86px;height:2px;background:linear-gradient(90deg,#00ffcd 0px,#05ffd3 19px,#6dffdd 49px,#fffaec 96px,#ffb3b3 124px,#ff7181 169px,#ff3554 248px,#ff0033 370px,#ff002c 408px)"></i><i style="top:88px;height:2px;background:linear-gradient(90deg,#00ffd2 0px,#03ffd8 19px,#60ffe1 45px,#fffdf4 95px,#ffb4b9 123px,#ff7285 168px,#ff3557 246px,#ff0035 368px,#ff002e 408px)"></i><i style="top:90px;height:2px;background:linear-gradient(90deg,#00ffd7 0px,#01ffdd 19px,#4fffe4 40px,#fffcfa 95px,#ffb3be 123px,#ff7188 168px,#ff3459 246px,#ff0037 366px,#ff002f 408px)"></i><i style="top:92px;height:2px;background:linear-gradient(90deg,#00ffdc 0px,#00ffe2 19px,#52ffea 41px,#fefaff 95px,#ffaebf 125px,#ff6d89 171px,#ff3059 252px,#ff0039 364px,#ff0031 408px)"></i><i style="top:94px;height:2px;background:linear-gradient(90deg,#00ffe1 0px,#03ffe8 20px,#61fff2 46px,#e4f8ff 88px,#ffedfb 99px,#ffa6bd 129px,#ff6586 178px,#ff2956 265px,#ff003b 363px,#ff0032 408px)"></i><i style="top:96px;height:2px;background:linear-gradient(90deg,#00ffe5 0px,#01ffed 20px,#51fff5 41px,#cbf5ff 81px,#ffe7fb 101px,#ffa0bc 132px,#ff6085 183px,#ff2355 275px,#ff003d 361px,#ff0034 408px)"></i><i style="top:98px;height:2px;background:linear-gradient(90deg,#00ffea 0px,#00fff2 20px,#50fffb 41px,#ffe3fe 102px,#ff9dbf 133px,#ff5e87 184px,#ff2156 278px,#ff003f 359px,#ff0035 408px)"></i><i style="top:100px;height:2px;background:linear-gradient(90deg,#00ffef 0px,#04fff8 21px,#58fcff 44px,#ffd9fb 105px,#ff94bb 138px,#ff5583 193px,#ff1852 295px,#ff0041 358px,#ff0037 408px)"></i><i style="top:102px;height:2px;background:linear-gradient(90deg,#00fff4 0px,#01fffd 21px,#47f9ff 39px,#ffd6fe 106px,#ff90bc 140px,#ff5284 196px,#ff1652 299px,#ff0043 356px,#ff0038 408px)"></i><i style="top:104px;height:2px;background:linear-gradient(90deg,#00fff9 0px,#00fcff 21px,#44f3ff 39px,#ffd0fe 108px,#ff8bbc 143px,#ff4d83 201px,#ff1152 307px,#ff0045 355px,#ff003a 408px)"></i><i style="top:106px;height:2px;background:linear-gradient(90deg,#00fffe 0px,#04f6ff 22px,#51ecff 44px,#ffcafe 110px,#ff87bd 145px,#ff4a84 204px,#ff0f52 311px,#ff0047 353px,#ff003b 408px)"></i><i style="top:108px;height:2px;background:linear-gradient(90deg,#00fbff 0px,#01f1ff 22px,#46e9ff 41px,#ffc4fe 112px,#ff82bd 148px,#ff4683 208px,#ff0b52 318px,#ff0048 355px,#ff003c 408px)"></i><i style="top:110px;height:2px;background:linear-gradient(90deg,#00f6ff 0px,#00ecff 22px,#44e4ff 41px,#ffbffe 114px,#ff7ebc 151px,#ff4283 213px,#ff0651 326px,#ff003e 407px,#ff003e 408px)"></i><i style="top:112px;height:2px;background:linear-gradient(90deg,#00f1ff 0px,#04e7ff 23px,#51ddff 46px,#ffb7fc 117px,#ff78bb 155px,#ff3d81 219px,#ff0050 336px,#ff003f 408px)"></i><i style="top:114px;height:2px;background:linear-gradient(90deg,#00ecff 0px,#02e3ff 23px,#46daff 43px,#ffb4fe 118px,#ff75bd 156px,#ff3c83 220px,#ff0052 336px,#ff0041 408px)"></i><i style="top:116px;height:2px;background:linear-gradient(90deg,#00e8ff 0px,#00deff 23px,#41d6ff 42px,#ffaffe 120px,#ff71bc 159px,#ff3883 224px,#ff0053 339px,#ff0042 408px)"></i><i style="top:118px;height:2px;background:linear-gradient(90deg,#00e4ff 0px,#04daff 24px,#50cfff 48px,#ffa8fc 123px,#ff6bbb 163px,#ff3482 230px,#ff0055 338px,#ff0044 408px)"></i><i style="top:120px;height:2px;background:linear-gradient(90deg,#00e0ff 0px,#02d5ff 24px,#49ccff 46px,#ffa5fe 124px,#ff69bd 164px,#ff3283 231px,#ff0057 336px,#ff0045 408px)"></i><i style="top:122px;height:2px;background:linear-gradient(90deg,#00dbff 0px,#00d1ff 24px,#42c9ff 44px,#ffa0fe 126px,#ff65bd 167px,#ff2f83 235px,#ff0059 334px,#ff0047 408px)"></i><i style="top:124px;height:2px;background:linear-gradient(90deg,#00d8ff 0px,#04cdff 25px,#4fc2ff 50px,#ff9afc 129px,#ff60bb 171px,#ff2b82 241px,#ff005c 332px,#ff0048 408px)"></i><i style="top:126px;height:2px;background:linear-gradient(90deg,#00d4ff 0px,#02c9ff 25px,#48bfff 48px,#ff97fe 130px,#ff5ebd 172px,#ff2984 242px,#ff005e 330px,#ff0049 408px)"></i><i style="top:128px;height:2px;background:linear-gradient(90deg,#00d0ff 0px,#00c6ff 25px,#42bdff 46px,#ff93fe 132px,#ff5bbd 175px,#ff2683 247px,#ff0060 328px,#ff004b 408px)"></i><i style="top:130px;height:2px;background:linear-gradient(90deg,#00ccff 0px,#04c2ff 26px,#51b6ff 53px,#ff8dfc 135px,#ff56bb 179px,#ff2282 253px,#ff0062 327px,#ff004c 408px)"></i><i style="top:132px;height:2px;background:linear-gradient(90deg,#00c9ff 0px,#02beff 26px,#48b4ff 50px,#ff88fd 137px,#ff52bb 182px,#ff1f82 257px,#ff0065 325px,#ff004e 408px)"></i><i style="top:134px;height:2px;background:linear-gradient(90deg,#00c5ff 0px,#05baff 27px,#57aeff 57px,#ff84fd 139px,#ff4fbc 184px,#ff1c82 260px,#ff0067 323px,#ff004f 408px)"></i><i style="top:136px;height:2px;background:linear-gradient(90deg,#00c2ff 0px,#04b7ff 27px,#51abff 55px,#ff80fd 141px,#ff4cbb 187px,#ff1982 264px,#ff0069 321px,#ff0050 408px)"></i><i style="top:138px;height:2px;background:linear-gradient(90deg,#00bfff 0px,#02b4ff 27px,#48a9ff 52px,#ff7dfd 143px,#ff49bb 190px,#ff1682 269px,#ff006c 319px,#ff0052 408px)"></i><i style="top:140px;height:2px;background:linear-gradient(90deg,#00bcff 0px,#05b0ff 28px,#56a3ff 59px,#ff79fd 145px,#ff45bb 193px,#ff1382 273px,#ff006e 318px,#ff0053 408px)"></i><i style="top:142px;height:2px;background:linear-gradient(90deg,#00b9ff 0px,#04adff 28px,#50a1ff 57px,#ff75fd 147px,#ff43bc 195px,#ff1082 276px,#ff0070 316px,#ff0054 408px)"></i><i style="top:144px;height:2px;background:linear-gradient(90deg,#00b6ff 0px,#02aaff 28px,#4a9fff 55px,#ff71fd 149px,#ff3fbb 198px,#ff0d82 280px,#ff0072 315px,#ff0056 408px)"></i><i style="top:146px;height:2px;background:linear-gradient(90deg,#00b3ff 0px,#05a7ff 29px,#559aff 61px,#ff6dfb 152px,#ff3bba 202px,#ff0981 286px,#ff0073 317px,#ff0057 408px)"></i><i style="top:148px;height:2px;background:linear-gradient(90deg,#00b0ff 0px,#04a4ff 29px,#4f98ff 59px,#ff6afd 153px,#ff3abc 203px,#ff0782 287px,#ff0074 320px,#ff0059 408px)"></i><i style="top:150px;height:2px;background:linear-gradient(90deg,#00adff 0px,#02a2ff 29px,#4a96ff 57px,#ff67fd 155px,#ff37bb 206px,#ff0482 291px,#ff005a 408px)"></i><i style="top:152px;height:2px;background:linear-gradient(90deg,#00aaff 0px,#059eff 30px,#5591ff 63px,#ff62fb 158px,#ff33ba 210px,#ff0081 297px,#ff005b 408px)"></i><i style="top:154px;height:2px;background:linear-gradient(90deg,#00a7ff 0px,#049cff 30px,#518fff 62px,#ff5ffb 160px,#ff30ba 213px,#ff0081 301px,#ff005d 408px)"></i><i style="top:156px;height:2px;background:linear-gradient(90deg,#00a5ff 0px,#0299ff 30px,#498dff 59px,#ff5dfd 161px,#ff2ebc 214px,#ff0084 299px,#ff005e 408px)"></i><i style="top:158px;height:2px;background:linear-gradient(90deg,#00a2ff 0px,#0596ff 31px,#5688ff 66px,#ff59fc 164px,#ff2bba 218px,#ff0087 297px,#ff005f 408px)"></i><i style="top:160px;height:2px;background:linear-gradient(90deg,#00a0ff 0px,#0494ff 31px,#5187ff 64px,#ff55fc 166px,#ff28ba 221px,#ff0089 295px,#ff0061 408px)"></i><i style="top:162px;height:2px;background:linear-gradient(90deg,#009dff 0px,#0292ff 31px,#4985ff 61px,#ff53fd 167px,#ff26bc 222px,#ff008c 293px,#ff0062 408px)"></i><i style="top:164px;height:2px;background:linear-gradient(90deg,#009bff 0px,#058fff 32px,#5580ff 68px,#ff4ffc 170px,#ff23bb 226px,#ff008f 291px,#ff0063 408px)"></i><i style="top:166px;height:2px;background:linear-gradient(90deg,#0099ff 0px,#048cff 32px,#507fff 66px,#ff4cfc 172px,#ff20ba 229px,#ff0092 289px,#ff0065 408px)"></i><i style="top:168px;height:2px;background:linear-gradient(90deg,#0096ff 0px,#028aff 32px,#4b7dff 64px,#ff4afe 173px,#ff1ebc 230px,#ff0095 287px,#ff0066 408px)"></i><i style="top:170px;height:2px;background:linear-gradient(90deg,#0094ff 0px,#0588ff 33px,#5579ff 70px,#ff46fc 176px,#ff1bbb 234px,#ff0097 286px,#ff0067 408px)"></i><i style="top:172px;height:2px;background:linear-gradient(90deg,#0092ff 0px,#0485ff 33px,#5078ff 68px,#ff44fc 178px,#ff18bb 237px,#ff009a 284px,#ff0069 408px)"></i><i style="top:174px;height:2px;background:linear-gradient(90deg,#0090ff 0px,#0283ff 33px,#4b76ff 66px,#ff41fc 180px,#ff15ba 240px,#ff009d 282px,#ff006a 408px)"></i><i style="top:176px;height:2px;background:linear-gradient(90deg,#008dff 0px,#0581ff 34px,#5671ff 73px,#ff3efc 182px,#ff13bb 242px,#ff00a0 280px,#ff006b 408px)"></i><i style="top:178px;height:2px;background:linear-gradient(90deg,#008bff 0px,#047fff 34px,#5170ff 71px,#ff3bfc 184px,#ff10bb 245px,#ff00a3 279px,#ff006d 407px,#ff006d 408px)"></i><i style="top:180px;height:2px;background:linear-gradient(90deg,#0089ff 0px,#027dff 34px,#4a70ff 68px,#ff38fc 186px,#ff0dba 248px,#ff00a6 278px,#ff006f 404px,#ff006e 408px)"></i><i style="top:182px;height:2px;background:linear-gradient(90deg,#0087ff 0px,#057aff 35px,#556bff 75px,#ff36fc 188px,#ff0bbb 250px,#ff00a7 278px,#ff0071 403px,#ff006f 408px)"></i><i style="top:184px;height:2px;background:linear-gradient(90deg,#0085ff 0px,#0479ff 35px,#506aff 73px,#ff33fc 190px,#ff08bb 253px,#ff00a7 282px,#ff0071 408px)"></i><i style="top:186px;height:2px;background:linear-gradient(90deg,#0083ff 0px,#0277ff 35px,#4c69ff 71px,#ff30fc 192px,#ff04bb 256px,#ff0081 363px,#ff0072 408px)"></i><i style="top:188px;height:2px;background:linear-gradient(90deg,#0081ff 0px,#0574ff 36px,#5565ff 77px,#ff2dfb 195px,#ff00ba 260px,#ff0081 369px,#ff0073 408px)"></i><i style="top:190px;height:2px;background:linear-gradient(90deg,#007fff 0px,#0473ff 36px,#5064ff 75px,#ff2bfd 196px,#ff00bb 261px,#ff0082 370px,#ff0075 408px)"></i><i style="top:192px;height:2px;background:linear-gradient(90deg,#007eff 0px,#0271ff 36px,#4c63ff 73px,#ff28fd 198px,#ff00bc 263px,#ff0082 372px,#ff0076 408px)"></i><i style="top:194px;height:2px;background:linear-gradient(90deg,#007cff 0px,#056fff 37px,#545fff 79px,#ff25fb 201px,#ff00bf 261px,#ff0085 368px,#ff0077 408px)"></i><i style="top:196px;height:2px;background:linear-gradient(90deg,#007aff 0px,#046dff 37px,#505eff 77px,#ff23fd 202px,#ff00c3 259px,#ff0088 364px,#ff0079 408px)"></i><i style="top:198px;height:2px;background:linear-gradient(90deg,#0078ff 0px,#026bff 37px,#4b5dff 75px,#ff21fd 204px,#ff00c6 257px,#ff008b 360px,#ff007a 408px)"></i><i style="top:200px;height:2px;background:linear-gradient(90deg,#0077ff 0px,#0569ff 38px,#5559ff 82px,#ff1dfb 207px,#ff00ca 255px,#ff008f 356px,#ff007b 408px)"></i><i style="top:202px;height:2px;background:linear-gradient(90deg,#0075ff 0px,#0468ff 38px,#5158ff 80px,#ff1bfc 209px,#ff00ce 253px,#ff0092 351px,#ff007d 408px)"></i><i style="top:204px;height:2px;background:linear-gradient(90deg,#0073ff 0px,#0266ff 38px,#4b57ff 77px,#ff19fd 210px,#ff00d2 251px,#ff0096 347px,#ff007e 408px)"></i><i style="top:206px;height:2px;background:linear-gradient(90deg,#0072ff 0px,#0564ff 39px,#5553ff 84px,#ff16fc 213px,#ff00d6 249px,#ff0099 343px,#ff007f 408px)"></i><i style="top:208px;height:2px;background:linear-gradient(90deg,#0070ff 0px,#0462ff 39px,#5052ff 82px,#ff13fc 215px,#ff00da 247px,#ff009c 339px,#ff0081 408px)"></i><i style="top:210px;height:2px;background:linear-gradient(90deg,#006eff 0px,#0261ff 39px,#4c52ff 80px,#ff11fd 216px,#ff00de 245px,#ff00a0 335px,#ff0082 408px)"></i><i style="top:212px;height:2px;background:linear-gradient(90deg,#006dff 0px,#055fff 40px,#544eff 86px,#ff0dfc 219px,#ff00e1 244px,#ff00a2 333px,#ff0083 408px)"></i><i style="top:214px;height:2px;background:linear-gradient(90deg,#006bff 0px,#045eff 40px,#504dff 84px,#ff0bfc 221px,#ff00e4 243px,#ff00a5 331px,#ff0085 408px)"></i><i style="top:216px;height:2px;background:linear-gradient(90deg,#006aff 0px,#025cff 40px,#4c4dff 82px,#ff08fd 222px,#ff00e5 244px,#ff00a6 332px,#ff0086 408px)"></i><i style="top:218px;height:2px;background:linear-gradient(90deg,#0068ff 0px,#055aff 41px,#5449ff 88px,#fe07ff 222px,#ff00e4 247px,#ff00a6 336px,#ff0087 408px)"></i><i style="top:220px;height:2px;background:linear-gradient(90deg,#0067ff 0px,#0459ff 41px,#5048ff 86px,#fa07ff 220px,#ff00e8 246px,#ff00a8 334px,#ff0088 408px)"></i><i style="top:222px;height:2px;background:linear-gradient(90deg,#0065ff 0px,#0357ff 41px,#4c48ff 84px,#f606ff 219px,#ff00f3 237px,#ff00b3 318px,#ff008a 408px)"></i><i style="top:224px;height:2px;background:linear-gradient(90deg,#0064ff 0px,#0456ff 42px,#5544ff 91px,#f404ff 219px,#ff00f6 236px,#ff00b6 316px,#ff008b 408px)"></i><i style="top:226px;height:2px;background:linear-gradient(90deg,#0062ff 0px,#0454ff 42px,#5143ff 89px,#ef04ff 217px,#ff00f8 237px,#ff00b7 317px,#ff008c 408px)"></i><i style="top:228px;height:2px;background:linear-gradient(90deg,#0061ff 0px,#0353ff 42px,#4c43ff 86px,#eb04ff 215px,#ff00f9 238px,#ff00b8 318px,#ff008e 408px)"></i><i style="top:230px;height:2px;background:linear-gradient(90deg,#0060ff 0px,#0451ff 43px,#543fff 93px,#e803ff 215px,#ff00f9 240px,#ff00b8 321px,#ff008f 408px)"></i><i style="top:232px;height:2px;background:linear-gradient(90deg,#005eff 0px,#0450ff 43px,#503fff 91px,#e403ff 213px,#ff00f9 242px,#ff00b8 324px,#ff0090 408px)"></i><i style="top:234px;height:2px;background:linear-gradient(90deg,#005dff 0px,#034fff 43px,#4d3eff 89px,#e003ff 211px,#ff00fa 243px,#ff00b9 325px,#ff0092 408px)"></i><i style="top:236px;height:2px;background:linear-gradient(90deg,#005cff 0px,#044dff 44px,#543bff 95px,#dd02ff 210px,#ff00fa 245px,#ff00b9 327px,#ff0093 408px)"></i><i style="top:238px;height:2px;background:linear-gradient(90deg,#005aff 0px,#044cff 44px,#503aff 93px,#d802ff 208px,#ff00fa 247px,#ff00b9 330px,#ff0094 408px)"></i><i style="top:240px;height:2px;background:linear-gradient(90deg,#0059ff 0px,#034bff 44px,#4d3aff 91px,#d402ff 206px,#ff00fa 249px,#ff00b9 333px,#ff0096 408px)"></i><i style="top:242px;height:2px;background:linear-gradient(90deg,#0058ff 0px,#0449ff 45px,#5336ff 97px,#de00ff 217px,#ff00f9 252px,#ff00b8 337px,#ff0097 408px)"></i><i style="top:244px;height:2px;background:linear-gradient(90deg,#0057ff 0px,#0448ff 45px,#5036ff 95px,#da00ff 215px,#ff00f9 254px,#ff00b8 340px,#ff0098 408px)"></i><i style="top:246px;height:2px;background:linear-gradient(90deg,#0055ff 0px,#0546ff 46px,#5632ff 101px,#d600ff 213px,#ff00f9 256px,#ff00b8 342px,#ff0099 408px)"></i><i style="top:248px;height:2px;background:linear-gradient(90deg,#0054ff 0px,#0445ff 46px,#5432ff 100px,#d200ff 211px,#ff00f9 258px,#ff00b8 345px,#ff009b 408px)"></i><i style="top:250px;height:2px;background:linear-gradient(90deg,#0053ff 0px,#0444ff 46px,#5131ff 98px,#ce00ff 209px,#ff00fa 260px,#ff00b8 348px,#ff009c 408px)"></i><i style="top:252px;height:2px;background:linear-gradient(90deg,#0052ff 0px,#0543ff 47px,#572eff 104px,#ca00ff 207px,#ff00fa 262px,#ff00b9 350px,#ff009d 408px)"></i><i style="top:254px;height:2px;background:linear-gradient(90deg,#0051ff 0px,#0441ff 47px,#542eff 102px,#c700ff 205px,#ff00fa 264px,#ff00b8 353px,#ff009f 408px)"></i><i style="top:256px;height:2px;background:linear-gradient(90deg,#004fff 0px,#0440ff 47px,#502dff 100px,#c300ff 203px,#ff00fa 266px,#ff00b8 356px,#ff00a0 408px)"></i><i style="top:258px;height:2px;background:linear-gradient(90deg,#004eff 0px,#053fff 48px,#572aff 106px,#bf00ff 201px,#ff00fa 268px,#ff00b9 358px,#ff00a1 408px)"></i><i style="top:260px;height:2px;background:linear-gradient(90deg,#004dff 0px,#043eff 48px,#532aff 104px,#bb00ff 199px,#ff00fa 270px,#ff00b9 361px,#ff00a2 408px)"></i><i style="top:262px;height:2px;background:linear-gradient(90deg,#004cff 0px,#043dff 48px,#5029ff 102px,#b800ff 197px,#ff00fa 272px,#ff00b8 364px,#ff00a4 408px)"></i><i style="top:264px;height:2px;background:linear-gradient(90deg,#004bff 0px,#053bff 49px,#5626ff 108px,#b400ff 195px,#ff00fa 274px,#ff00b9 366px,#ff00a5 408px)"></i><i style="top:266px;height:2px;background:linear-gradient(90deg,#004aff 0px,#043aff 49px,#5326ff 106px,#b100ff 193px,#ff00fa 276px,#ff00b9 369px,#ff00a6 408px)"></i><i style="top:268px;height:2px;background:linear-gradient(90deg,#0049ff 0px,#0439ff 49px,#5026ff 104px,#ad00ff 191px,#ff00fa 278px,#ff00b9 372px,#ff00a8 408px)"></i><i style="top:270px;height:2px;background:linear-gradient(90deg,#0048ff 0px,#0538ff 50px,#5622ff 110px,#aa00ff 189px,#ff00fa 280px,#ff00b9 374px,#ff00a9 408px)"></i><i style="top:272px;height:2px;background:linear-gradient(90deg,#0047ff 0px,#0437ff 50px,#5422ff 109px,#a600ff 187px,#ff00fa 282px,#ff00b9 377px,#ff00aa 408px)"></i><i style="top:274px;height:2px;background:linear-gradient(90deg,#0046ff 0px,#0336ff 50px,#5121ff 107px,#a300ff 185px,#ff00fa 284px,#ff00b9 380px,#ff00ac 408px)"></i><i style="top:276px;height:2px;background:linear-gradient(90deg,#0045ff 0px,#0534ff 51px,#571eff 113px,#a000ff 183px,#ff00fa 286px,#ff00b9 382px,#ff00ad 408px)"></i><i style="top:278px;height:2px;background:linear-gradient(90deg,#0043ff 0px,#0433ff 51px,#531eff 111px,#9c00ff 181px,#ff00fa 288px,#ff00b9 385px,#ff00ae 408px)"></i><i style="top:280px;height:2px;background:linear-gradient(90deg,#0042ff 0px,#0332ff 51px,#501eff 109px,#9900ff 179px,#ff00fa 290px,#ff00b9 388px,#ff00af 408px)"></i><i style="top:282px;height:2px;background:linear-gradient(90deg,#0041ff 0px,#0531ff 52px,#561aff 115px,#9600ff 177px,#ff00fa 292px,#ff00b9 391px,#ff00b1 408px)"></i><i style="top:284px;height:2px;background:linear-gradient(90deg,#0040ff 0px,#0430ff 52px,#531aff 113px,#9400ff 176px,#ff00fa 294px,#ff00b9 393px,#ff00b2 408px)"></i><i style="top:286px;height:2px;background:linear-gradient(90deg,#0040ff 0px,#032fff 52px,#501aff 111px,#9100ff 174px,#ff00fa 296px,#ff00b9 396px,#ff00b3 408px)"></i><i style="top:288px;height:2px;background:linear-gradient(90deg,#003fff 0px,#052eff 53px,#5617ff 117px,#8d00ff 172px,#ff00fb 298px,#ff00b9 399px,#ff00b5 408px)"></i><i style="top:290px;height:2px;background:linear-gradient(90deg,#003eff 0px,#042dff 53px,#5316ff 115px,#8a00ff 170px,#ff00fb 300px,#ff00b9 401px,#ff00b6 408px)"></i><i style="top:292px;height:2px;background:linear-gradient(90deg,#003dff 0px,#032cff 53px,#5016ff 113px,#8800ff 169px,#ff00fb 302px,#ff00b9 404px,#ff00b7 408px)"></i><i style="top:294px;height:2px;background:linear-gradient(90deg,#003cff 0px,#052bff 54px,#5513ff 119px,#8500ff 167px,#ff00fb 304px,#ff00b9 407px,#ff00b9 408px)"></i><i style="top:296px;height:2px;background:linear-gradient(90deg,#003bff 0px,#042aff 54px,#5412ff 118px,#8200ff 165px,#ff00fb 306px,#ff00ba 408px)"></i><i style="top:298px;height:2px;background:linear-gradient(90deg,#003aff 0px,#0329ff 54px,#5112ff 116px,#7f00ff 163px,#ff00fb 308px,#ff00bb 408px)"></i><i style="top:300px;height:2px;background:linear-gradient(90deg,#0039ff 0px,#0528ff 55px,#560fff 122px,#7d00ff 162px,#ff00fb 310px,#ff00bc 408px)"></i><i style="top:302px;height:2px;background:linear-gradient(90deg,#0038ff 0px,#0427ff 55px,#530fff 120px,#7b00ff 161px,#ff00fb 312px,#ff00be 408px)"></i><i style="top:304px;height:2px;background:linear-gradient(90deg,#0037ff 0px,#0326ff 55px,#500fff 118px,#7900ff 159px,#ff00fb 314px,#ff00bf 408px)"></i><i style="top:306px;height:2px;background:linear-gradient(90deg,#0036ff 0px,#0525ff 56px,#560bff 124px,#7800ff 159px,#ff00fa 317px,#ff00c0 408px)"></i><i style="top:308px;height:2px;background:linear-gradient(90deg,#0035ff 0px,#0424ff 56px,#530bff 122px,#7500ff 157px,#ff00fa 319px,#ff00c2 408px)"></i><i style="top:310px;height:2px;background:linear-gradient(90deg,#0034ff 0px,#0323ff 56px,#500bff 120px,#7200ff 155px,#ff00fa 321px,#ff00c3 408px)"></i><i style="top:312px;height:2px;background:linear-gradient(90deg,#0034ff 0px,#0522ff 57px,#5507ff 126px,#7c00ff 167px,#ff00fa 323px,#ff00c4 408px)"></i><i style="top:314px;height:2px;background:linear-gradient(90deg,#0033ff 0px,#0421ff 57px,#5307ff 124px,#7900ff 165px,#ff00fa 325px,#ff00c5 408px)"></i><i style="top:316px;height:2px;background:linear-gradient(90deg,#0032ff 0px,#0320ff 57px,#5007ff 122px,#7800ff 164px,#ff00fa 327px,#ff00c7 408px)"></i><i style="top:318px;height:2px;background:linear-gradient(90deg,#0031ff 0px,#051fff 58px,#5502ff 128px,#ff00fb 328px,#ff00c8 408px)"></i><i style="top:320px;height:2px;background:linear-gradient(90deg,#0030ff 0px,#041eff 58px,#5301ff 127px,#ff00fc 329px,#ff00c9 408px)"></i><i style="top:322px;height:2px;background:linear-gradient(90deg,#002fff 0px,#031dff 58px,#5101ff 125px,#ff00fc 331px,#ff00cb 408px)"></i><i style="top:324px;height:2px;background:linear-gradient(90deg,#002fff 0px,#051cff 59px,#5600ff 131px,#ff00fb 334px,#ff00cc 408px)"></i><i style="top:326px;height:2px;background:linear-gradient(90deg,#002eff 0px,#041bff 59px,#5300ff 129px,#ff00fb 336px,#ff00cd 408px)"></i><i style="top:328px;height:2px;background:linear-gradient(90deg,#002dff 0px,#031bff 59px,#5000ff 127px,#ff00fc 337px,#ff00cf 408px)"></i><i style="top:330px;height:2px;background:linear-gradient(90deg,#002cff 0px,#0519ff 60px,#5500ff 133px,#ff00fb 340px,#ff00d0 408px)"></i><i style="top:332px;height:2px;background:linear-gradient(90deg,#002bff 0px,#0419ff 60px,#5300ff 131px,#ff00fb 342px,#ff00d1 408px)"></i><i style="top:334px;height:2px;background:linear-gradient(90deg,#002bff 0px,#0318ff 60px,#5000ff 129px,#ff00fc 343px,#ff00d2 408px)"></i><i style="top:336px;height:2px;background:linear-gradient(90deg,#002aff 0px,#0517ff 61px,#4e00ff 127px,#ff00fc 345px,#ff00d4 408px)"></i><i style="top:338px;height:2px;background:linear-gradient(90deg,#0029ff 0px,#0416ff 61px,#4b00ff 125px,#ff00fc 347px,#ff00d5 408px)"></i><i style="top:340px;height:2px;background:linear-gradient(90deg,#0028ff 0px,#0315ff 61px,#4900ff 123px,#ff00fd 348px,#ff00d6 408px)"></i><i style="top:342px;height:2px;background:linear-gradient(90deg,#0027ff 0px,#0514ff 62px,#4700ff 122px,#ff00fd 350px,#ff00d8 408px)"></i><i style="top:344px;height:2px;background:linear-gradient(90deg,#0027ff 0px,#0413ff 62px,#4400ff 120px,#ff00fd 352px,#ff00d9 408px)"></i><i style="top:346px;height:2px;background:linear-gradient(90deg,#0026ff 0px,#0312ff 62px,#4200ff 118px,#ff00fe 353px,#ff00da 408px)"></i><i style="top:348px;height:2px;background:linear-gradient(90deg,#0025ff 0px,#0511ff 63px,#4000ff 116px,#ff00fe 355px,#ff00dc 408px)"></i><i style="top:350px;height:2px;background:linear-gradient(90deg,#0024ff 0px,#0410ff 63px,#3e00ff 115px,#ff00ff 356px,#ff00dd 408px)"></i><i style="top:352px;height:2px;background:linear-gradient(90deg,#0024ff 0px,#050fff 64px,#3c00ff 113px,#ff00ff 357px,#ff00de 408px)"></i><i style="top:354px;height:2px;background:linear-gradient(90deg,#0023ff 0px,#050eff 64px,#3a00ff 112px,#ff00ff 359px,#ff00df 408px)"></i><i style="top:356px;height:2px;background:linear-gradient(90deg,#0022ff 0px,#040eff 64px,#3800ff 110px,#f600ff 349px,#ff00f5 376px,#ff00e1 408px)"></i><i style="top:358px;height:2px;background:linear-gradient(90deg,#0021ff 0px,#050dff 65px,#3600ff 109px,#f100ff 344px,#ff00f8 374px,#ff00e2 408px)"></i><i style="top:360px;height:2px;background:linear-gradient(90deg,#0021ff 0px,#050cff 65px,#3500ff 108px,#eb00ff 339px,#ff00f8 375px,#ff00e3 408px)"></i><i style="top:362px;height:2px;background:linear-gradient(90deg,#0020ff 0px,#040bff 65px,#3300ff 107px,#e600ff 334px,#ff00f9 376px,#ff00e5 408px)"></i><i style="top:364px;height:2px;background:linear-gradient(90deg,#001fff 0px,#050aff 66px,#3300ff 107px,#e400ff 333px,#ff00f9 378px,#ff00e6 408px)"></i><i style="top:366px;height:2px;background:linear-gradient(90deg,#001fff 0px,#0509ff 66px,#3200ff 107px,#e300ff 333px,#ff00f9 380px,#ff00e7 408px)"></i><i style="top:368px;height:2px;background:linear-gradient(90deg,#001eff 0px,#0408ff 66px,#3200ff 108px,#e400ff 336px,#ff00f9 382px,#ff00e9 408px)"></i><i style="top:370px;height:2px;background:linear-gradient(90deg,#001dff 0px,#0507ff 67px,#3b00ff 118px,#ff00ff 376px,#ff00ea 408px)"></i><i style="top:372px;height:2px;background:linear-gradient(90deg,#001cff 0px,#0506ff 67px,#5200ff 146px,#ff00fb 383px,#ff00eb 408px)"></i><i style="top:374px;height:2px;background:linear-gradient(90deg,#001cff 0px,#0405ff 67px,#5300ff 147px,#ff00fb 385px,#ff00ed 408px)"></i><i style="top:376px;height:2px;background:linear-gradient(90deg,#001bff 0px,#0503ff 68px,#5700ff 153px,#ff00fb 387px,#ff00ee 408px)"></i><i style="top:378px;height:2px;background:linear-gradient(90deg,#001aff 0px,#0502ff 68px,#5500ff 151px,#ff00fb 389px,#ff00ef 408px)"></i><i style="top:380px;height:2px;background:linear-gradient(90deg,#001aff 0px,#0401ff 68px,#5200ff 149px,#ff00fb 391px,#ff00f0 408px)"></i><i style="top:382px;height:2px;background:linear-gradient(90deg,#0019ff 0px,#0500ff 69px,#5700ff 155px,#ff00fb 393px,#ff00f2 408px)"></i><i style="top:384px;height:2px;background:linear-gradient(90deg,#0018ff 0px,#0500ff 69px,#5400ff 153px,#ff00fc 395px,#ff00f3 408px)"></i><i style="top:386px;height:2px;background:linear-gradient(90deg,#0018ff 0px,#0400ff 69px,#5200ff 151px,#ff00fc 397px,#ff00f4 408px)"></i></div>
</div>
<svg width="1920" height="981" viewBox="0 0 1920 981">
<rect x="1316.60" y="106.70" width="15.00" height="15.00" fill="none" stroke="#fff" stroke-width="1.8"/>
<rect x="1330.60" y="120.70" width="15.00" height="15.00" fill="none" stroke="#fff" stroke-width="1.8"/>
<rect x="1344.90" y="134.80" width="15.00" height="15.00" fill="none" stroke="#fff" stroke-width="1.8"/>
<rect x="1362.20" y="150.60" width="15.00" height="15.00" fill="none" stroke="#fff" stroke-width="1.8"/>
<rect x="1382.00" y="171.00" width="15.00" height="15.00" fill="none" stroke="#fff" stroke-width="1.8"/>
<rect x="1413.70" y="115.50" width="15.00" height="15.00" fill="none" stroke="#fff" stroke-width="1.8"/>
<rect x="1412.10" y="128.80" width="15.00" height="15.00" fill="none" stroke="#fff" stroke-width="1.8"/>
<rect x="1411.50" y="142.90" width="15.00" height="15.00" fill="none" stroke="#fff" stroke-width="1.8"/>
<rect x="1410.50" y="158.60" width="15.00" height="15.00" fill="none" stroke="#fff" stroke-width="1.8"/>
<rect x="1409.60" y="175.20" width="15.00" height="15.00" fill="none" stroke="#fff" stroke-width="1.8"/>
<rect x="1333.60" y="208.80" width="15.00" height="15.00" fill="none" stroke="#fff" stroke-width="1.8"/>
<rect x="1347.70" y="205.40" width="15.00" height="15.00" fill="none" stroke="#fff" stroke-width="1.8"/>
<rect x="1362.40" y="203.60" width="15.00" height="15.00" fill="none" stroke="#fff" stroke-width="1.8"/>
<rect x="1376.10" y="200.50" width="15.00" height="15.00" fill="none" stroke="#fff" stroke-width="1.8"/>
<rect x="1390.60" y="199.60" width="15.00" height="15.00" fill="none" stroke="#fff" stroke-width="1.8"/>
<rect x="1462.40" y="186.80" width="15.00" height="15.00" fill="none" stroke="#fff" stroke-width="1.8"/>
<rect x="1525.40" y="175.60" width="15.00" height="15.00" fill="none" stroke="#fff" stroke-width="1.8"/>
<rect x="1581.80" y="166.00" width="15.00" height="15.00" fill="none" stroke="#fff" stroke-width="1.8"/>
<rect x="1646.50" y="156.80" width="15.00" height="15.00" fill="none" stroke="#fff" stroke-width="1.8"/>
<rect x="1717.10" y="143.80" width="15.00" height="15.00" fill="none" stroke="#fff" stroke-width="1.8"/>
<rect x="1426.50" y="214.90" width="15.00" height="15.00" fill="none" stroke="#fff" stroke-width="1.8"/>
<rect x="1448.70" y="238.90" width="15.00" height="15.00" fill="none" stroke="#fff" stroke-width="1.8"/>
<rect x="1472.30" y="260.40" width="15.00" height="15.00" fill="none" stroke="#fff" stroke-width="1.8"/>
<rect x="1502.00" y="290.30" width="15.00" height="15.00" fill="none" stroke="#fff" stroke-width="1.8"/>
<rect x="1538.30" y="326.50" width="15.00" height="15.00" fill="none" stroke="#fff" stroke-width="1.8"/>
<rect x="1402.70" y="230.70" width="15.00" height="15.00" fill="none" stroke="#fff" stroke-width="1.8"/>
<rect x="1399.70" y="274.60" width="15.00" height="15.00" fill="none" stroke="#fff" stroke-width="1.8"/>
<rect x="1394.80" y="326.60" width="15.00" height="15.00" fill="none" stroke="#fff" stroke-width="1.8"/>
<rect x="1388.80" y="392.30" width="15.00" height="15.00" fill="none" stroke="#fff" stroke-width="1.8"/>
<rect x="1379.70" y="489.80" width="15.00" height="15.00" fill="none" stroke="#fff" stroke-width="1.8"/>
<rect x="1406.00" y="195.80" width="15.00" height="15.00" fill="none" stroke="#000" stroke-width="2.2"/>
<circle cx="1309.90" cy="114.10" r="4.90" fill="#20b020" stroke="#1a1a1a" stroke-width="1.4"/>
<circle cx="1325.50" cy="124.80" r="4.90" fill="#50ac50" stroke="#1a1a1a" stroke-width="1.4"/>
<circle cx="1339.70" cy="136.10" r="4.90" fill="#6aac6a" stroke="#1a1a1a" stroke-width="1.4"/>
<circle cx="1356.70" cy="151.80" r="4.90" fill="#86b086" stroke="#1a1a1a" stroke-width="1.4"/>
<circle cx="1383.80" cy="173.90" r="4.90" fill="#a0b4a0" stroke="#1a1a1a" stroke-width="1.4"/>
<circle cx="1418.40" cy="124.40" r="4.90" fill="#c4c010" stroke="#1a1a1a" stroke-width="1.4"/>
<circle cx="1420.10" cy="135.70" r="4.90" fill="#bcbc50" stroke="#1a1a1a" stroke-width="1.4"/>
<circle cx="1420.10" cy="145.10" r="4.90" fill="#bcbc6a" stroke="#1a1a1a" stroke-width="1.4"/>
<circle cx="1420.10" cy="159.40" r="4.90" fill="#bcbc86" stroke="#1a1a1a" stroke-width="1.4"/>
<circle cx="1418.40" cy="178.20" r="4.90" fill="#bcbca0" stroke="#1a1a1a" stroke-width="1.4"/>
<circle cx="1336.30" cy="214.90" r="4.90" fill="#20b4b4" stroke="#1a1a1a" stroke-width="1.4"/>
<circle cx="1350.80" cy="213.50" r="4.90" fill="#50b0b0" stroke="#1a1a1a" stroke-width="1.4"/>
<circle cx="1363.10" cy="209.90" r="4.90" fill="#70aeae" stroke="#1a1a1a" stroke-width="1.4"/>
<circle cx="1380.50" cy="208.50" r="4.90" fill="#8aacac" stroke="#1a1a1a" stroke-width="1.4"/>
<circle cx="1397.60" cy="204.70" r="4.90" fill="#a0acac" stroke="#1a1a1a" stroke-width="1.4"/>
<circle cx="1493.50" cy="191.20" r="4.90" fill="#bc8e8e" stroke="#1a1a1a" stroke-width="1.4"/>
<circle cx="1562.60" cy="182.00" r="4.90" fill="#bc7070" stroke="#1a1a1a" stroke-width="1.4"/>
<circle cx="1614.20" cy="173.70" r="4.90" fill="#bc5a5a" stroke="#1a1a1a" stroke-width="1.4"/>
<circle cx="1666.20" cy="165.40" r="4.90" fill="#bc4444" stroke="#1a1a1a" stroke-width="1.4"/>
<circle cx="1725.60" cy="156.50" r="4.90" fill="#b01010" stroke="#1a1a1a" stroke-width="1.4"/>
<circle cx="1446.20" cy="225.30" r="4.90" fill="#b8a0b8" stroke="#1a1a1a" stroke-width="1.4"/>
<circle cx="1477.80" cy="250.60" r="4.90" fill="#bc90bc" stroke="#1a1a1a" stroke-width="1.4"/>
<circle cx="1505.90" cy="274.20" r="4.90" fill="#bc80bc" stroke="#1a1a1a" stroke-width="1.4"/>
<circle cx="1537.30" cy="301.10" r="4.90" fill="#c070c0" stroke="#1a1a1a" stroke-width="1.4"/>
<circle cx="1574.90" cy="330.70" r="4.90" fill="#c020c0" stroke="#1a1a1a" stroke-width="1.4"/>
<circle cx="1416.20" cy="297.40" r="4.90" fill="#8a8ab8" stroke="#1a1a1a" stroke-width="1.4"/>
<circle cx="1416.20" cy="353.60" r="4.90" fill="#7070b0" stroke="#1a1a1a" stroke-width="1.4"/>
<circle cx="1414.70" cy="416.80" r="4.90" fill="#5050a8" stroke="#1a1a1a" stroke-width="1.4"/>
<circle cx="1413.10" cy="513.80" r="4.90" fill="#2020a0" stroke="#1a1a1a" stroke-width="1.4"/>
<circle cx="1418.50" cy="246.00" r="4.90" fill="#a8a8b8" stroke="#1a1a1a" stroke-width="1.4"/>
<circle cx="1417.00" cy="247.00" r="4.90" fill="#000" stroke="#1a1a1a" stroke-width="1.4"/>
<circle cx="1419.80" cy="200.60" r="4.90" fill="#ffffff" stroke="#1a1a1a" stroke-width="1.4"/>
<rect x="1654.30" y="469.20" width="250.80" height="172.30" fill="#303030"/>
<rect x="1657.30" y="472.20" width="245.10" height="166.20" fill="#9a9a9a"/>
</svg>
<div class="lay" style="left:1659px;top:474px;width:242px;height:163px"></div>
<svg width="1920" height="981" viewBox="0 0 1920 981"><defs><linearGradient id="edge" x1="0" y1="0" x2="1" y2="0"><stop offset="0" stop-color="#000" stop-opacity="0"/><stop offset="1" stop-color="#000" stop-opacity="0.55"/></linearGradient><linearGradient id="ib" gradientUnits="userSpaceOnUse" x1="1659" y1="474" x2="1901" y2="670"><stop offset="0" stop-color="#a0ff00"/><stop offset="0.3" stop-color="#ccff00"/><stop offset="0.5" stop-color="#ffff00"/><stop offset="0.72" stop-color="#ffd800"/><stop offset="1" stop-color="#ffa800"/></linearGradient><linearGradient id="id" gradientUnits="userSpaceOnUse" x1="1659" y1="474" x2="1901" y2="620.1"><stop offset="0" stop-color="#5a9400"/><stop offset="0.5" stop-color="#929600"/><stop offset="1" stop-color="#9a6e00"/></linearGradient></defs>
<polygon points="1659,474 1901,474 1901,620.1 1659,490.2" fill="url(#id)"/><polygon points="1659,490.2 1901,620.1 1901,637 1659,637" fill="url(#ib)"/>
<rect x="1771.60" y="546.20" width="15.60" height="15.60" fill="none" stroke="#fff" stroke-width="1.9"/>
<rect x="1915" y="0" width="5" height="981" fill="url(#edge)"/>
<circle cx="1752.40" cy="560.30" r="4.90" fill="#c2bc10" stroke="#1a1a1a" stroke-width="1.4"/>
</svg>
</body></html>
